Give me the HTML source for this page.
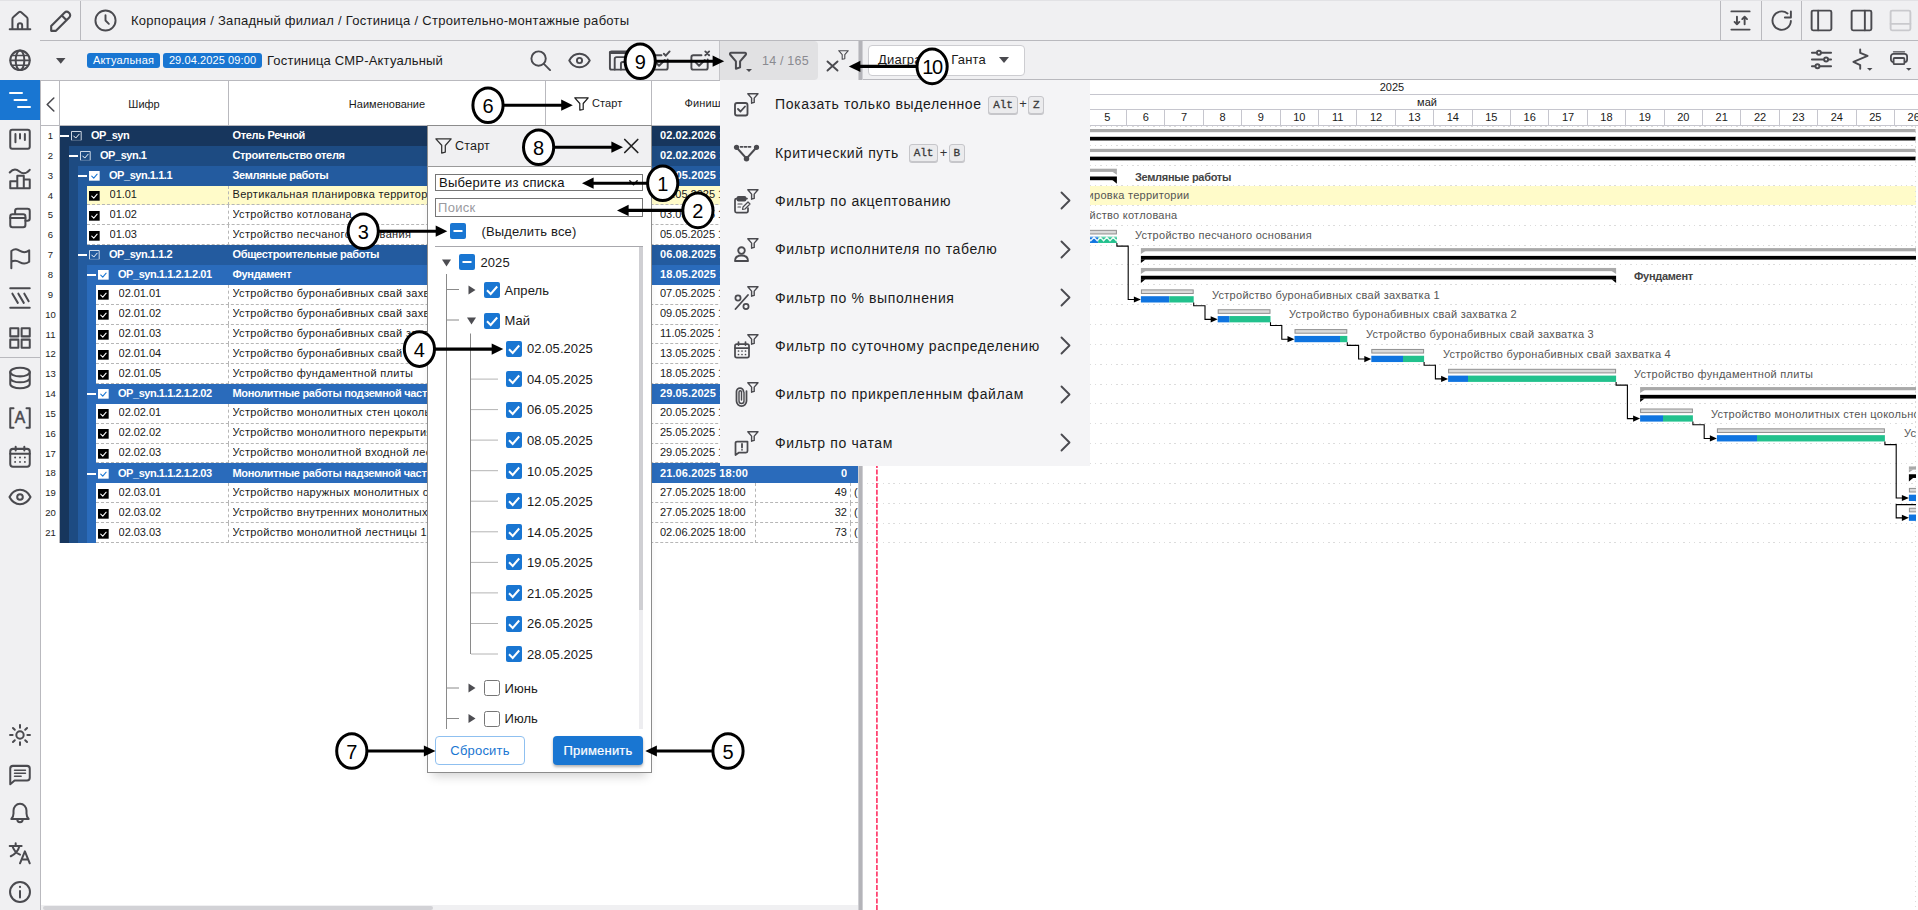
<!DOCTYPE html>
<html lang="ru"><head><meta charset="utf-8"><title>Фильтр по столбцу</title>
<style>
*{box-sizing:border-box;margin:0;padding:0}
html,body{width:1918px;height:910px;overflow:hidden;background:#fff}
body{font-family:"Liberation Sans",sans-serif;font-size:11px;color:#1a1a1a;position:relative}
.abs{position:absolute}
svg{position:absolute;overflow:visible}
.ic{stroke:#4a4a4f;fill:none;stroke-width:1.5;stroke-linecap:round;stroke-linejoin:round}
#side{left:0;top:0;width:41px;height:910px;background:#f0f0f2;border-right:1px solid #b9b9be}
#top{left:40px;top:0;width:1878px;height:41px;background:#f0f0f2;border-bottom:1px solid #b9b9be}
#tb{left:40px;top:41px;width:823px;height:40px;background:#f0f0f2;border-bottom:1px solid #b9b9be}
#tb2{left:863px;top:41px;width:1055px;height:39px;background:#f0f0f2;border-bottom:1px solid #b9b9be}
.vsep{width:1px;background:#b9b9be}
.badge{background:#1976d2;color:#fff;border-radius:3px;height:15px;line-height:15px;font-size:11px;text-align:center;top:53px}
.t{white-space:nowrap;position:absolute}
.hdr{top:82px;height:44px;line-height:44px;text-align:center;font-size:11px;color:#1a1a1a}
.row{position:absolute;left:60px;height:20px}
.rn{position:absolute;left:41px;width:19px;text-align:center;font-size:9.5px;color:#222;height:20px;line-height:20px}
.c{position:absolute;white-space:nowrap;font-size:11px;line-height:20px;height:20px;overflow:hidden}
.b{font-weight:bold;color:#fff}
.gl{position:absolute;white-space:nowrap;font-size:11px;color:#555;line-height:14px}
.num{position:absolute;font-size:20px;color:#000;text-align:center;font-family:"Liberation Sans",sans-serif}
</style></head><body>
<div class="abs" style="left:41px;top:81px;width:817px;height:45px;background:#fff;border-bottom:1px solid #b9b9be"></div>
<div class="abs vsep" style="left:59px;top:81px;height:45px"></div>
<div class="abs vsep" style="left:228px;top:81px;height:45px"></div>
<div class="abs vsep" style="left:545px;top:81px;height:45px"></div>
<div class="abs vsep" style="left:651px;top:81px;height:45px"></div>
<svg class="ic" style="left:45.500px;top:97px" width="9" height="15" viewBox="0 0 9 15"><path d="M7.800 1l-6.600 6.500 6.600 6.500" stroke-width="1.600"/></svg>
<div class="abs hdr" style="left:60px;width:168px">Шифр</div>
<div class="abs hdr" style="left:229px;width:316px">Наименование</div>
<svg class="ic" style="left:574px;top:97px" width="15" height="14" viewBox="0 0 15 14"><path d="M.800 .800h13.400l-5 5.700v6l-3.400 .700v-6.700z" stroke="#1a1a1a" stroke-width="1.200"/></svg>
<div class="t" style="left:592px;top:96px;font-size:11px;line-height:14px;letter-spacing:.1px">Старт</div>
<div class="t" style="left:684.500px;top:96px;font-size:11px;line-height:14px;letter-spacing:.1px">Финиш</div>
<div class="abs vsep" style="left:59px;top:126px;height:417px"></div>
<div class="rn" style="top:126.0px">1</div>
<div class="abs" style="left:60px;width:797.5px;top:126.0px;height:20.150000000000002px;background:#17365d"></div>
<div class="abs" style="left:60.3px;top:135.3px;width:9.200px;height:1.800px;background:#fff"></div>
<svg style="left:71px;top:131.2px" width="10.700" height="9.700" viewBox="0 0 11 10"><path d="M.500 9.500v-9h10v9" fill="none" stroke="#e8eef6" stroke-width=".900"/><path d="M.500 9.600h10" stroke="#e8eef6" stroke-width=".500" opacity=".6"/><path d="M2.800 5.200l2.100 2.100 3.500-4" fill="none" stroke="#fff" stroke-width="1" stroke-linecap="round" stroke-linejoin="round"/></svg>
<div class="c b" style="left:91px;top:125.2px;width:137px;letter-spacing:-.45px">OP_syn</div>
<div class="c b" style="left:232.400px;top:125.2px;width:312px;letter-spacing:-.3px">Отель Речной</div>
<div class="c b" style="left:660px;top:125.2px;width:94px;letter-spacing:.1px">02.02.2026 18:00</div>
<div class="rn" style="top:145.85px">2</div>
<div class="abs" style="left:60px;width:9px;top:145.85px;height:20.150000000000002px;background:#17365d"></div>
<div class="abs" style="left:69px;width:788.5px;top:145.85px;height:20.150000000000002px;background:#1d4b82"></div>
<div class="abs" style="left:69.3px;top:155.15px;width:9.200px;height:1.800px;background:#fff"></div>
<svg style="left:80px;top:151.05px" width="10.700" height="9.700" viewBox="0 0 11 10"><path d="M.500 9.500v-9h10v9" fill="none" stroke="#e8eef6" stroke-width=".900"/><path d="M.500 9.600h10" stroke="#e8eef6" stroke-width=".500" opacity=".6"/><path d="M2.800 5.200l2.100 2.100 3.500-4" fill="none" stroke="#fff" stroke-width="1" stroke-linecap="round" stroke-linejoin="round"/></svg>
<div class="c b" style="left:100px;top:145.05px;width:128px;letter-spacing:-.45px">OP_syn.1</div>
<div class="c b" style="left:232.400px;top:145.05px;width:312px;letter-spacing:-.3px">Строительство отеля</div>
<div class="c b" style="left:660px;top:145.05px;width:94px;letter-spacing:.1px">02.02.2026 18:00</div>
<div class="rn" style="top:165.7px">3</div>
<div class="abs" style="left:60px;width:9px;top:165.7px;height:20.150000000000002px;background:#17365d"></div>
<div class="abs" style="left:69px;width:9px;top:165.7px;height:20.150000000000002px;background:#1d4b82"></div>
<div class="abs" style="left:78px;width:779.5px;top:165.7px;height:20.150000000000002px;background:#235b9f"></div>
<div class="abs" style="left:78.3px;top:175.0px;width:9.200px;height:1.800px;background:#fff"></div>
<svg style="left:89px;top:170.9px" width="10.700" height="9.700" viewBox="0 0 11 10"><rect x="0" y="0" width="11" height="10" fill="#fff"/><path d="M2.800 5.200l2.100 2.100 3.500-4" fill="none" stroke="#1976d2" stroke-width="1.1" stroke-linecap="round" stroke-linejoin="round"/></svg>
<div class="c b" style="left:109px;top:164.9px;width:119px;letter-spacing:-.45px">OP_syn.1.1.1</div>
<div class="c b" style="left:232.400px;top:164.9px;width:312px;letter-spacing:-.3px">Земляные работы</div>
<div class="c b" style="left:660px;top:164.9px;width:94px;letter-spacing:.1px">05.05.2025 18:00</div>
<div class="rn" style="top:185.55px">4</div>
<div class="abs" style="left:60px;width:9px;top:185.55px;height:20.150000000000002px;background:#17365d"></div>
<div class="abs" style="left:69px;width:9px;top:185.55px;height:20.150000000000002px;background:#1d4b82"></div>
<div class="abs" style="left:78px;width:9px;top:185.55px;height:20.150000000000002px;background:#235b9f"></div>
<div class="abs" style="left:87px;width:770.5px;top:185.55px;height:20.150000000000002px;background:#fffbc9"></div>
<svg style="left:89.2px;top:191.05px" width="10.700" height="9.700" viewBox="0 0 11 10"><rect x="0" y="0" width="11" height="10" fill="#000"/><path d="M2.800 5.200l2.100 2.100 3.500-4" fill="none" stroke="#fff" stroke-width="1.1" stroke-linecap="round" stroke-linejoin="round"/></svg>
<div class="c" style="left:109.6px;top:184.05px;width:119px;letter-spacing:-.05px">01.01</div>
<div class="c" style="left:232.500px;top:184.05px;width:312px;letter-spacing:.33px">Вертикальная планировка территории</div>
<div class="c" style="left:660px;top:184.05px;width:94px">01.05.2025 18:00</div>
<div class="abs" style="left:87px;width:770.5px;top:204.4px;height:0;border-top:1px dashed #b6b6b6"></div>
<div class="abs" style="left:228px;top:185.55px;height:19.85px;width:0;border-left:1px dashed #b6b6b6"></div>
<div class="abs" style="left:755px;top:185.55px;height:19.85px;width:0;border-left:1px dashed #b6b6b6"></div>
<div class="abs" style="left:850px;top:185.55px;height:19.85px;width:0;border-left:1px dashed #b6b6b6"></div>
<div class="rn" style="top:205.4px">5</div>
<div class="abs" style="left:60px;width:9px;top:205.4px;height:20.150000000000002px;background:#17365d"></div>
<div class="abs" style="left:69px;width:9px;top:205.4px;height:20.150000000000002px;background:#1d4b82"></div>
<div class="abs" style="left:78px;width:9px;top:205.4px;height:20.150000000000002px;background:#235b9f"></div>
<div class="abs" style="left:87px;width:770.5px;top:205.4px;height:20.150000000000002px;background:#fff"></div>
<svg style="left:89.2px;top:210.9px" width="10.700" height="9.700" viewBox="0 0 11 10"><rect x="0" y="0" width="11" height="10" fill="#000"/><path d="M2.800 5.200l2.100 2.100 3.500-4" fill="none" stroke="#fff" stroke-width="1.1" stroke-linecap="round" stroke-linejoin="round"/></svg>
<div class="c" style="left:109.6px;top:203.9px;width:119px;letter-spacing:-.05px">01.02</div>
<div class="c" style="left:232.500px;top:203.9px;width:312px;letter-spacing:.33px">Устройство котлована</div>
<div class="c" style="left:660px;top:203.9px;width:94px">03.05.2025 18:00</div>
<div class="abs" style="left:87px;width:770.5px;top:224.25px;height:0;border-top:1px dashed #b6b6b6"></div>
<div class="abs" style="left:228px;top:205.4px;height:19.85px;width:0;border-left:1px dashed #b6b6b6"></div>
<div class="abs" style="left:755px;top:205.4px;height:19.85px;width:0;border-left:1px dashed #b6b6b6"></div>
<div class="abs" style="left:850px;top:205.4px;height:19.85px;width:0;border-left:1px dashed #b6b6b6"></div>
<div class="rn" style="top:225.25px">6</div>
<div class="abs" style="left:60px;width:9px;top:225.25px;height:20.150000000000002px;background:#17365d"></div>
<div class="abs" style="left:69px;width:9px;top:225.25px;height:20.150000000000002px;background:#1d4b82"></div>
<div class="abs" style="left:78px;width:9px;top:225.25px;height:20.150000000000002px;background:#235b9f"></div>
<div class="abs" style="left:87px;width:770.5px;top:225.25px;height:20.150000000000002px;background:#fff"></div>
<svg style="left:89.2px;top:230.75px" width="10.700" height="9.700" viewBox="0 0 11 10"><rect x="0" y="0" width="11" height="10" fill="#000"/><path d="M2.800 5.200l2.100 2.100 3.500-4" fill="none" stroke="#fff" stroke-width="1.1" stroke-linecap="round" stroke-linejoin="round"/></svg>
<div class="c" style="left:109.6px;top:223.75px;width:119px;letter-spacing:-.05px">01.03</div>
<div class="c" style="left:232.500px;top:223.75px;width:312px;letter-spacing:.33px">Устройство песчаного основания</div>
<div class="c" style="left:660px;top:223.75px;width:94px">05.05.2025 18:00</div>
<div class="abs" style="left:87px;width:770.5px;top:244.1px;height:0;border-top:1px dashed #b6b6b6"></div>
<div class="abs" style="left:228px;top:225.25px;height:19.85px;width:0;border-left:1px dashed #b6b6b6"></div>
<div class="abs" style="left:755px;top:225.25px;height:19.85px;width:0;border-left:1px dashed #b6b6b6"></div>
<div class="abs" style="left:850px;top:225.25px;height:19.85px;width:0;border-left:1px dashed #b6b6b6"></div>
<div class="rn" style="top:245.1px">7</div>
<div class="abs" style="left:60px;width:9px;top:245.1px;height:20.150000000000002px;background:#17365d"></div>
<div class="abs" style="left:69px;width:9px;top:245.1px;height:20.150000000000002px;background:#1d4b82"></div>
<div class="abs" style="left:78px;width:779.5px;top:245.1px;height:20.150000000000002px;background:#235b9f"></div>
<div class="abs" style="left:78.3px;top:254.4px;width:9.200px;height:1.800px;background:#fff"></div>
<svg style="left:89px;top:250.3px" width="10.700" height="9.700" viewBox="0 0 11 10"><path d="M.500 9.500v-9h10v9" fill="none" stroke="#e8eef6" stroke-width=".900"/><path d="M.500 9.600h10" stroke="#e8eef6" stroke-width=".500" opacity=".6"/><path d="M2.800 5.200l2.100 2.100 3.500-4" fill="none" stroke="#fff" stroke-width="1" stroke-linecap="round" stroke-linejoin="round"/></svg>
<div class="c b" style="left:109px;top:244.3px;width:119px;letter-spacing:-.45px">OP_syn.1.1.2</div>
<div class="c b" style="left:232.400px;top:244.3px;width:312px;letter-spacing:-.3px">Общестроительные работы</div>
<div class="c b" style="left:660px;top:244.3px;width:94px;letter-spacing:.1px">06.08.2025 18:00</div>
<div class="rn" style="top:264.95px">8</div>
<div class="abs" style="left:60px;width:9px;top:264.95px;height:20.150000000000002px;background:#17365d"></div>
<div class="abs" style="left:69px;width:9px;top:264.95px;height:20.150000000000002px;background:#1d4b82"></div>
<div class="abs" style="left:78px;width:9px;top:264.95px;height:20.150000000000002px;background:#235b9f"></div>
<div class="abs" style="left:87px;width:770.5px;top:264.95px;height:20.150000000000002px;background:#2a6bbb"></div>
<div class="abs" style="left:87.3px;top:274.25px;width:9.200px;height:1.800px;background:#fff"></div>
<svg style="left:98px;top:270.15px" width="10.700" height="9.700" viewBox="0 0 11 10"><rect x="0" y="0" width="11" height="10" fill="#fff"/><path d="M2.800 5.200l2.100 2.100 3.500-4" fill="none" stroke="#1976d2" stroke-width="1.1" stroke-linecap="round" stroke-linejoin="round"/></svg>
<div class="c b" style="left:118px;top:264.15px;width:110px;letter-spacing:-.45px">OP_syn.1.1.2.1.2.01</div>
<div class="c b" style="left:232.400px;top:264.15px;width:312px;letter-spacing:-.3px">Фундамент</div>
<div class="c b" style="left:660px;top:264.15px;width:94px;letter-spacing:.1px">18.05.2025 18:00</div>
<div class="rn" style="top:284.8px">9</div>
<div class="abs" style="left:60px;width:9px;top:284.8px;height:20.150000000000002px;background:#17365d"></div>
<div class="abs" style="left:69px;width:9px;top:284.8px;height:20.150000000000002px;background:#1d4b82"></div>
<div class="abs" style="left:78px;width:9px;top:284.8px;height:20.150000000000002px;background:#235b9f"></div>
<div class="abs" style="left:87px;width:9px;top:284.8px;height:20.150000000000002px;background:#2a6bbb"></div>
<div class="abs" style="left:96px;width:761.5px;top:284.8px;height:20.150000000000002px;background:#fff"></div>
<svg style="left:98.2px;top:290.3px" width="10.700" height="9.700" viewBox="0 0 11 10"><rect x="0" y="0" width="11" height="10" fill="#000"/><path d="M2.800 5.200l2.100 2.100 3.500-4" fill="none" stroke="#fff" stroke-width="1.1" stroke-linecap="round" stroke-linejoin="round"/></svg>
<div class="c" style="left:118.6px;top:283.3px;width:110px;letter-spacing:-.05px">02.01.01</div>
<div class="c" style="left:232.500px;top:283.3px;width:312px;letter-spacing:.33px">Устройство буронабивных свай захватка 1</div>
<div class="c" style="left:660px;top:283.3px;width:94px">07.05.2025 18:00</div>
<div class="abs" style="left:96px;width:761.5px;top:303.65px;height:0;border-top:1px dashed #b6b6b6"></div>
<div class="abs" style="left:228px;top:284.8px;height:19.85px;width:0;border-left:1px dashed #b6b6b6"></div>
<div class="abs" style="left:755px;top:284.8px;height:19.85px;width:0;border-left:1px dashed #b6b6b6"></div>
<div class="abs" style="left:850px;top:284.8px;height:19.85px;width:0;border-left:1px dashed #b6b6b6"></div>
<div class="rn" style="top:304.65px">10</div>
<div class="abs" style="left:60px;width:9px;top:304.65px;height:20.150000000000002px;background:#17365d"></div>
<div class="abs" style="left:69px;width:9px;top:304.65px;height:20.150000000000002px;background:#1d4b82"></div>
<div class="abs" style="left:78px;width:9px;top:304.65px;height:20.150000000000002px;background:#235b9f"></div>
<div class="abs" style="left:87px;width:9px;top:304.65px;height:20.150000000000002px;background:#2a6bbb"></div>
<div class="abs" style="left:96px;width:761.5px;top:304.65px;height:20.150000000000002px;background:#fff"></div>
<svg style="left:98.2px;top:310.15px" width="10.700" height="9.700" viewBox="0 0 11 10"><rect x="0" y="0" width="11" height="10" fill="#000"/><path d="M2.800 5.200l2.100 2.100 3.500-4" fill="none" stroke="#fff" stroke-width="1.1" stroke-linecap="round" stroke-linejoin="round"/></svg>
<div class="c" style="left:118.6px;top:303.15px;width:110px;letter-spacing:-.05px">02.01.02</div>
<div class="c" style="left:232.500px;top:303.15px;width:312px;letter-spacing:.33px">Устройство буронабивных свай захватка 2</div>
<div class="c" style="left:660px;top:303.15px;width:94px">09.05.2025 18:00</div>
<div class="abs" style="left:96px;width:761.5px;top:323.5px;height:0;border-top:1px dashed #b6b6b6"></div>
<div class="abs" style="left:228px;top:304.65px;height:19.85px;width:0;border-left:1px dashed #b6b6b6"></div>
<div class="abs" style="left:755px;top:304.65px;height:19.85px;width:0;border-left:1px dashed #b6b6b6"></div>
<div class="abs" style="left:850px;top:304.65px;height:19.85px;width:0;border-left:1px dashed #b6b6b6"></div>
<div class="rn" style="top:324.5px">11</div>
<div class="abs" style="left:60px;width:9px;top:324.5px;height:20.150000000000002px;background:#17365d"></div>
<div class="abs" style="left:69px;width:9px;top:324.5px;height:20.150000000000002px;background:#1d4b82"></div>
<div class="abs" style="left:78px;width:9px;top:324.5px;height:20.150000000000002px;background:#235b9f"></div>
<div class="abs" style="left:87px;width:9px;top:324.5px;height:20.150000000000002px;background:#2a6bbb"></div>
<div class="abs" style="left:96px;width:761.5px;top:324.5px;height:20.150000000000002px;background:#fff"></div>
<svg style="left:98.2px;top:330.0px" width="10.700" height="9.700" viewBox="0 0 11 10"><rect x="0" y="0" width="11" height="10" fill="#000"/><path d="M2.800 5.200l2.100 2.100 3.500-4" fill="none" stroke="#fff" stroke-width="1.1" stroke-linecap="round" stroke-linejoin="round"/></svg>
<div class="c" style="left:118.6px;top:323.0px;width:110px;letter-spacing:-.05px">02.01.03</div>
<div class="c" style="left:232.500px;top:323.0px;width:312px;letter-spacing:.33px">Устройство буронабивных свай захватка 3</div>
<div class="c" style="left:660px;top:323.0px;width:94px">11.05.2025 18:00</div>
<div class="abs" style="left:96px;width:761.5px;top:343.35px;height:0;border-top:1px dashed #b6b6b6"></div>
<div class="abs" style="left:228px;top:324.5px;height:19.85px;width:0;border-left:1px dashed #b6b6b6"></div>
<div class="abs" style="left:755px;top:324.5px;height:19.85px;width:0;border-left:1px dashed #b6b6b6"></div>
<div class="abs" style="left:850px;top:324.5px;height:19.85px;width:0;border-left:1px dashed #b6b6b6"></div>
<div class="rn" style="top:344.35px">12</div>
<div class="abs" style="left:60px;width:9px;top:344.35px;height:20.150000000000002px;background:#17365d"></div>
<div class="abs" style="left:69px;width:9px;top:344.35px;height:20.150000000000002px;background:#1d4b82"></div>
<div class="abs" style="left:78px;width:9px;top:344.35px;height:20.150000000000002px;background:#235b9f"></div>
<div class="abs" style="left:87px;width:9px;top:344.35px;height:20.150000000000002px;background:#2a6bbb"></div>
<div class="abs" style="left:96px;width:761.5px;top:344.35px;height:20.150000000000002px;background:#fff"></div>
<svg style="left:98.2px;top:349.85px" width="10.700" height="9.700" viewBox="0 0 11 10"><rect x="0" y="0" width="11" height="10" fill="#000"/><path d="M2.800 5.200l2.100 2.100 3.500-4" fill="none" stroke="#fff" stroke-width="1.1" stroke-linecap="round" stroke-linejoin="round"/></svg>
<div class="c" style="left:118.6px;top:342.85px;width:110px;letter-spacing:-.05px">02.01.04</div>
<div class="c" style="left:232.500px;top:342.85px;width:312px;letter-spacing:.33px">Устройство буронабивных свай захватка 4</div>
<div class="c" style="left:660px;top:342.85px;width:94px">13.05.2025 18:00</div>
<div class="abs" style="left:96px;width:761.5px;top:363.2px;height:0;border-top:1px dashed #b6b6b6"></div>
<div class="abs" style="left:228px;top:344.35px;height:19.85px;width:0;border-left:1px dashed #b6b6b6"></div>
<div class="abs" style="left:755px;top:344.35px;height:19.85px;width:0;border-left:1px dashed #b6b6b6"></div>
<div class="abs" style="left:850px;top:344.35px;height:19.85px;width:0;border-left:1px dashed #b6b6b6"></div>
<div class="rn" style="top:364.2px">13</div>
<div class="abs" style="left:60px;width:9px;top:364.2px;height:20.150000000000002px;background:#17365d"></div>
<div class="abs" style="left:69px;width:9px;top:364.2px;height:20.150000000000002px;background:#1d4b82"></div>
<div class="abs" style="left:78px;width:9px;top:364.2px;height:20.150000000000002px;background:#235b9f"></div>
<div class="abs" style="left:87px;width:9px;top:364.2px;height:20.150000000000002px;background:#2a6bbb"></div>
<div class="abs" style="left:96px;width:761.5px;top:364.2px;height:20.150000000000002px;background:#fff"></div>
<svg style="left:98.2px;top:369.7px" width="10.700" height="9.700" viewBox="0 0 11 10"><rect x="0" y="0" width="11" height="10" fill="#000"/><path d="M2.800 5.200l2.100 2.100 3.500-4" fill="none" stroke="#fff" stroke-width="1.1" stroke-linecap="round" stroke-linejoin="round"/></svg>
<div class="c" style="left:118.6px;top:362.7px;width:110px;letter-spacing:-.05px">02.01.05</div>
<div class="c" style="left:232.500px;top:362.7px;width:312px;letter-spacing:.33px">Устройство фундаментной плиты</div>
<div class="c" style="left:660px;top:362.7px;width:94px">18.05.2025 18:00</div>
<div class="abs" style="left:96px;width:761.5px;top:383.05px;height:0;border-top:1px dashed #b6b6b6"></div>
<div class="abs" style="left:228px;top:364.2px;height:19.85px;width:0;border-left:1px dashed #b6b6b6"></div>
<div class="abs" style="left:755px;top:364.2px;height:19.85px;width:0;border-left:1px dashed #b6b6b6"></div>
<div class="abs" style="left:850px;top:364.2px;height:19.85px;width:0;border-left:1px dashed #b6b6b6"></div>
<div class="rn" style="top:384.05px">14</div>
<div class="abs" style="left:60px;width:9px;top:384.05px;height:20.150000000000002px;background:#17365d"></div>
<div class="abs" style="left:69px;width:9px;top:384.05px;height:20.150000000000002px;background:#1d4b82"></div>
<div class="abs" style="left:78px;width:9px;top:384.05px;height:20.150000000000002px;background:#235b9f"></div>
<div class="abs" style="left:87px;width:770.5px;top:384.05px;height:20.150000000000002px;background:#2a6bbb"></div>
<div class="abs" style="left:87.3px;top:393.35px;width:9.200px;height:1.800px;background:#fff"></div>
<svg style="left:98px;top:389.25px" width="10.700" height="9.700" viewBox="0 0 11 10"><rect x="0" y="0" width="11" height="10" fill="#fff"/><path d="M2.800 5.200l2.100 2.100 3.500-4" fill="none" stroke="#1976d2" stroke-width="1.1" stroke-linecap="round" stroke-linejoin="round"/></svg>
<div class="c b" style="left:118px;top:383.25px;width:110px;letter-spacing:-.45px">OP_syn.1.1.2.1.2.02</div>
<div class="c b" style="left:232.400px;top:383.25px;width:312px;letter-spacing:-.3px">Монолитные работы подземной части</div>
<div class="c b" style="left:660px;top:383.25px;width:94px;letter-spacing:.1px">29.05.2025 18:00</div>
<div class="rn" style="top:403.9px">15</div>
<div class="abs" style="left:60px;width:9px;top:403.9px;height:20.150000000000002px;background:#17365d"></div>
<div class="abs" style="left:69px;width:9px;top:403.9px;height:20.150000000000002px;background:#1d4b82"></div>
<div class="abs" style="left:78px;width:9px;top:403.9px;height:20.150000000000002px;background:#235b9f"></div>
<div class="abs" style="left:87px;width:9px;top:403.9px;height:20.150000000000002px;background:#2a6bbb"></div>
<div class="abs" style="left:96px;width:761.5px;top:403.9px;height:20.150000000000002px;background:#fff"></div>
<svg style="left:98.2px;top:409.4px" width="10.700" height="9.700" viewBox="0 0 11 10"><rect x="0" y="0" width="11" height="10" fill="#000"/><path d="M2.800 5.200l2.100 2.100 3.500-4" fill="none" stroke="#fff" stroke-width="1.1" stroke-linecap="round" stroke-linejoin="round"/></svg>
<div class="c" style="left:118.6px;top:402.4px;width:110px;letter-spacing:-.05px">02.02.01</div>
<div class="c" style="left:232.500px;top:402.4px;width:312px;letter-spacing:.33px">Устройство монолитных стен цокольного этажа</div>
<div class="c" style="left:660px;top:402.4px;width:94px">20.05.2025 18:00</div>
<div class="abs" style="left:96px;width:761.5px;top:422.75px;height:0;border-top:1px dashed #b6b6b6"></div>
<div class="abs" style="left:228px;top:403.9px;height:19.85px;width:0;border-left:1px dashed #b6b6b6"></div>
<div class="abs" style="left:755px;top:403.9px;height:19.85px;width:0;border-left:1px dashed #b6b6b6"></div>
<div class="abs" style="left:850px;top:403.9px;height:19.85px;width:0;border-left:1px dashed #b6b6b6"></div>
<div class="rn" style="top:423.75px">16</div>
<div class="abs" style="left:60px;width:9px;top:423.75px;height:20.150000000000002px;background:#17365d"></div>
<div class="abs" style="left:69px;width:9px;top:423.75px;height:20.150000000000002px;background:#1d4b82"></div>
<div class="abs" style="left:78px;width:9px;top:423.75px;height:20.150000000000002px;background:#235b9f"></div>
<div class="abs" style="left:87px;width:9px;top:423.75px;height:20.150000000000002px;background:#2a6bbb"></div>
<div class="abs" style="left:96px;width:761.5px;top:423.75px;height:20.150000000000002px;background:#fff"></div>
<svg style="left:98.2px;top:429.25px" width="10.700" height="9.700" viewBox="0 0 11 10"><rect x="0" y="0" width="11" height="10" fill="#000"/><path d="M2.800 5.200l2.100 2.100 3.500-4" fill="none" stroke="#fff" stroke-width="1.1" stroke-linecap="round" stroke-linejoin="round"/></svg>
<div class="c" style="left:118.6px;top:422.25px;width:110px;letter-spacing:-.05px">02.02.02</div>
<div class="c" style="left:232.500px;top:422.25px;width:312px;letter-spacing:.33px">Устройство монолитного перекрытия</div>
<div class="c" style="left:660px;top:422.25px;width:94px">25.05.2025 18:00</div>
<div class="abs" style="left:96px;width:761.5px;top:442.6px;height:0;border-top:1px dashed #b6b6b6"></div>
<div class="abs" style="left:228px;top:423.75px;height:19.85px;width:0;border-left:1px dashed #b6b6b6"></div>
<div class="abs" style="left:755px;top:423.75px;height:19.85px;width:0;border-left:1px dashed #b6b6b6"></div>
<div class="abs" style="left:850px;top:423.75px;height:19.85px;width:0;border-left:1px dashed #b6b6b6"></div>
<div class="rn" style="top:443.6px">17</div>
<div class="abs" style="left:60px;width:9px;top:443.6px;height:20.150000000000002px;background:#17365d"></div>
<div class="abs" style="left:69px;width:9px;top:443.6px;height:20.150000000000002px;background:#1d4b82"></div>
<div class="abs" style="left:78px;width:9px;top:443.6px;height:20.150000000000002px;background:#235b9f"></div>
<div class="abs" style="left:87px;width:9px;top:443.6px;height:20.150000000000002px;background:#2a6bbb"></div>
<div class="abs" style="left:96px;width:761.5px;top:443.6px;height:20.150000000000002px;background:#fff"></div>
<svg style="left:98.2px;top:449.1px" width="10.700" height="9.700" viewBox="0 0 11 10"><rect x="0" y="0" width="11" height="10" fill="#000"/><path d="M2.800 5.200l2.100 2.100 3.500-4" fill="none" stroke="#fff" stroke-width="1.1" stroke-linecap="round" stroke-linejoin="round"/></svg>
<div class="c" style="left:118.6px;top:442.1px;width:110px;letter-spacing:-.05px">02.02.03</div>
<div class="c" style="left:232.500px;top:442.1px;width:312px;letter-spacing:.33px">Устройство монолитной входной лестницы</div>
<div class="c" style="left:660px;top:442.1px;width:94px">29.05.2025 18:00</div>
<div class="abs" style="left:96px;width:761.5px;top:462.45px;height:0;border-top:1px dashed #b6b6b6"></div>
<div class="abs" style="left:228px;top:443.6px;height:19.85px;width:0;border-left:1px dashed #b6b6b6"></div>
<div class="abs" style="left:755px;top:443.6px;height:19.85px;width:0;border-left:1px dashed #b6b6b6"></div>
<div class="abs" style="left:850px;top:443.6px;height:19.85px;width:0;border-left:1px dashed #b6b6b6"></div>
<div class="rn" style="top:463.45px">18</div>
<div class="abs" style="left:60px;width:9px;top:463.45px;height:20.150000000000002px;background:#17365d"></div>
<div class="abs" style="left:69px;width:9px;top:463.45px;height:20.150000000000002px;background:#1d4b82"></div>
<div class="abs" style="left:78px;width:9px;top:463.45px;height:20.150000000000002px;background:#235b9f"></div>
<div class="abs" style="left:87px;width:770.5px;top:463.45px;height:20.150000000000002px;background:#2a6bbb"></div>
<div class="abs" style="left:87.3px;top:472.75px;width:9.200px;height:1.800px;background:#fff"></div>
<svg style="left:98px;top:468.65px" width="10.700" height="9.700" viewBox="0 0 11 10"><rect x="0" y="0" width="11" height="10" fill="#fff"/><path d="M2.800 5.200l2.100 2.100 3.500-4" fill="none" stroke="#1976d2" stroke-width="1.1" stroke-linecap="round" stroke-linejoin="round"/></svg>
<div class="c b" style="left:118px;top:462.65px;width:110px;letter-spacing:-.45px">OP_syn.1.1.2.1.2.03</div>
<div class="c b" style="left:232.400px;top:462.65px;width:312px;letter-spacing:-.3px">Монолитные работы надземной части</div>
<div class="c b" style="left:660px;top:462.65px;width:94px;letter-spacing:.1px">21.06.2025 18:00</div>
<div class="c b" style="left:760px;top:462.65px;width:87px;text-align:right">0</div>
<div class="rn" style="top:483.3px">19</div>
<div class="abs" style="left:60px;width:9px;top:483.3px;height:20.150000000000002px;background:#17365d"></div>
<div class="abs" style="left:69px;width:9px;top:483.3px;height:20.150000000000002px;background:#1d4b82"></div>
<div class="abs" style="left:78px;width:9px;top:483.3px;height:20.150000000000002px;background:#235b9f"></div>
<div class="abs" style="left:87px;width:9px;top:483.3px;height:20.150000000000002px;background:#2a6bbb"></div>
<div class="abs" style="left:96px;width:761.5px;top:483.3px;height:20.150000000000002px;background:#fff"></div>
<svg style="left:98.2px;top:488.8px" width="10.700" height="9.700" viewBox="0 0 11 10"><rect x="0" y="0" width="11" height="10" fill="#000"/><path d="M2.800 5.200l2.100 2.100 3.500-4" fill="none" stroke="#fff" stroke-width="1.1" stroke-linecap="round" stroke-linejoin="round"/></svg>
<div class="c" style="left:118.6px;top:481.8px;width:110px;letter-spacing:-.05px">02.03.01</div>
<div class="c" style="left:232.500px;top:481.8px;width:312px;letter-spacing:.33px">Устройство наружных монолитных стен</div>
<div class="c" style="left:660px;top:481.8px;width:94px">27.05.2025 18:00</div>
<div class="c" style="left:760px;top:481.8px;width:87px;text-align:right">49</div>
<div class="c" style="left:854px;top:481.8px;width:4px">(</div>
<div class="abs" style="left:96px;width:761.5px;top:502.15px;height:0;border-top:1px dashed #b6b6b6"></div>
<div class="abs" style="left:228px;top:483.3px;height:19.85px;width:0;border-left:1px dashed #b6b6b6"></div>
<div class="abs" style="left:755px;top:483.3px;height:19.85px;width:0;border-left:1px dashed #b6b6b6"></div>
<div class="abs" style="left:850px;top:483.3px;height:19.85px;width:0;border-left:1px dashed #b6b6b6"></div>
<div class="rn" style="top:503.15px">20</div>
<div class="abs" style="left:60px;width:9px;top:503.15px;height:20.150000000000002px;background:#17365d"></div>
<div class="abs" style="left:69px;width:9px;top:503.15px;height:20.150000000000002px;background:#1d4b82"></div>
<div class="abs" style="left:78px;width:9px;top:503.15px;height:20.150000000000002px;background:#235b9f"></div>
<div class="abs" style="left:87px;width:9px;top:503.15px;height:20.150000000000002px;background:#2a6bbb"></div>
<div class="abs" style="left:96px;width:761.5px;top:503.15px;height:20.150000000000002px;background:#fff"></div>
<svg style="left:98.2px;top:508.65px" width="10.700" height="9.700" viewBox="0 0 11 10"><rect x="0" y="0" width="11" height="10" fill="#000"/><path d="M2.800 5.200l2.100 2.100 3.500-4" fill="none" stroke="#fff" stroke-width="1.1" stroke-linecap="round" stroke-linejoin="round"/></svg>
<div class="c" style="left:118.6px;top:501.65px;width:110px;letter-spacing:-.05px">02.03.02</div>
<div class="c" style="left:232.500px;top:501.65px;width:312px;letter-spacing:.33px">Устройство внутренних монолитных стен</div>
<div class="c" style="left:660px;top:501.65px;width:94px">27.05.2025 18:00</div>
<div class="c" style="left:760px;top:501.65px;width:87px;text-align:right">32</div>
<div class="c" style="left:854px;top:501.65px;width:4px">(</div>
<div class="abs" style="left:96px;width:761.5px;top:522.0px;height:0;border-top:1px dashed #b6b6b6"></div>
<div class="abs" style="left:228px;top:503.15px;height:19.85px;width:0;border-left:1px dashed #b6b6b6"></div>
<div class="abs" style="left:755px;top:503.15px;height:19.85px;width:0;border-left:1px dashed #b6b6b6"></div>
<div class="abs" style="left:850px;top:503.15px;height:19.85px;width:0;border-left:1px dashed #b6b6b6"></div>
<div class="rn" style="top:523.0px">21</div>
<div class="abs" style="left:60px;width:9px;top:523.0px;height:20.150000000000002px;background:#17365d"></div>
<div class="abs" style="left:69px;width:9px;top:523.0px;height:20.150000000000002px;background:#1d4b82"></div>
<div class="abs" style="left:78px;width:9px;top:523.0px;height:20.150000000000002px;background:#235b9f"></div>
<div class="abs" style="left:87px;width:9px;top:523.0px;height:20.150000000000002px;background:#2a6bbb"></div>
<div class="abs" style="left:96px;width:761.5px;top:523.0px;height:20.150000000000002px;background:#fff"></div>
<svg style="left:98.2px;top:528.5px" width="10.700" height="9.700" viewBox="0 0 11 10"><rect x="0" y="0" width="11" height="10" fill="#000"/><path d="M2.800 5.200l2.100 2.100 3.500-4" fill="none" stroke="#fff" stroke-width="1.1" stroke-linecap="round" stroke-linejoin="round"/></svg>
<div class="c" style="left:118.6px;top:521.5px;width:110px;letter-spacing:-.05px">02.03.03</div>
<div class="c" style="left:232.500px;top:521.5px;width:312px;letter-spacing:.33px">Устройство монолитной лестницы 1-го этажа</div>
<div class="c" style="left:660px;top:521.5px;width:94px">02.06.2025 18:00</div>
<div class="c" style="left:760px;top:521.5px;width:87px;text-align:right">73</div>
<div class="c" style="left:854px;top:521.5px;width:4px">(</div>
<div class="abs" style="left:96px;width:761.5px;top:541.85px;height:0;border-top:1px dashed #b6b6b6"></div>
<div class="abs" style="left:228px;top:523.0px;height:19.85px;width:0;border-left:1px dashed #b6b6b6"></div>
<div class="abs" style="left:755px;top:523.0px;height:19.85px;width:0;border-left:1px dashed #b6b6b6"></div>
<div class="abs" style="left:850px;top:523.0px;height:19.85px;width:0;border-left:1px dashed #b6b6b6"></div>
<div class="abs" style="left:41px;top:905px;width:817px;height:5px;background:#f0f0f2"></div>
<div class="abs" style="left:43px;top:906px;width:390px;height:4px;background:#d2d2d6;border-radius:2px"></div>
<div class="abs" style="left:863px;top:80px;width:1055px;height:830px;background:#fff"></div>
<div class="abs" style="left:863px;top:81px;width:1055px;height:45px;overflow:hidden">
<div class="abs" style="left:0;top:13px;width:1055px;height:1px;background:#c6c6ce"></div>
<div class="abs" style="left:0;top:28px;width:1055px;height:1px;background:#c6c6ce"></div>
<div class="abs" style="left:0;top:44px;width:1055px;height:1px;background:#c6c6ce"></div>
<div class="t" style="left:509px;top:0px;width:40px;text-align:center;font-size:11px;line-height:13px">2025</div>
<div class="t" style="left:544px;top:14px;width:40px;text-align:center;font-size:11px;line-height:14px">май</div>
<div class="abs" style="left:-5.8px;top:29px;width:1px;height:15px;background:#c6c6ce"></div>
<div class="abs" style="left:32.6px;top:29px;width:1px;height:15px;background:#c6c6ce"></div>
<div class="abs" style="left:71.0px;top:29px;width:1px;height:15px;background:#c6c6ce"></div>
<div class="t" style="left:71.5px;top:29px;width:38.400px;text-align:center;font-size:11px;line-height:15px">1</div>
<div class="abs" style="left:109.4px;top:29px;width:1px;height:15px;background:#c6c6ce"></div>
<div class="t" style="left:109.9px;top:29px;width:38.400px;text-align:center;font-size:11px;line-height:15px">2</div>
<div class="abs" style="left:147.8px;top:29px;width:1px;height:15px;background:#c6c6ce"></div>
<div class="t" style="left:148.3px;top:29px;width:38.400px;text-align:center;font-size:11px;line-height:15px">3</div>
<div class="abs" style="left:186.2px;top:29px;width:1px;height:15px;background:#c6c6ce"></div>
<div class="t" style="left:186.7px;top:29px;width:38.400px;text-align:center;font-size:11px;line-height:15px">4</div>
<div class="abs" style="left:224.6px;top:29px;width:1px;height:15px;background:#c6c6ce"></div>
<div class="t" style="left:225.1px;top:29px;width:38.400px;text-align:center;font-size:11px;line-height:15px">5</div>
<div class="abs" style="left:263.0px;top:29px;width:1px;height:15px;background:#c6c6ce"></div>
<div class="t" style="left:263.5px;top:29px;width:38.400px;text-align:center;font-size:11px;line-height:15px">6</div>
<div class="abs" style="left:301.4px;top:29px;width:1px;height:15px;background:#c6c6ce"></div>
<div class="t" style="left:301.9px;top:29px;width:38.400px;text-align:center;font-size:11px;line-height:15px">7</div>
<div class="abs" style="left:339.8px;top:29px;width:1px;height:15px;background:#c6c6ce"></div>
<div class="t" style="left:340.3px;top:29px;width:38.400px;text-align:center;font-size:11px;line-height:15px">8</div>
<div class="abs" style="left:378.2px;top:29px;width:1px;height:15px;background:#c6c6ce"></div>
<div class="t" style="left:378.7px;top:29px;width:38.400px;text-align:center;font-size:11px;line-height:15px">9</div>
<div class="abs" style="left:416.6px;top:29px;width:1px;height:15px;background:#c6c6ce"></div>
<div class="t" style="left:417.1px;top:29px;width:38.400px;text-align:center;font-size:11px;line-height:15px">10</div>
<div class="abs" style="left:455.0px;top:29px;width:1px;height:15px;background:#c6c6ce"></div>
<div class="t" style="left:455.5px;top:29px;width:38.400px;text-align:center;font-size:11px;line-height:15px">11</div>
<div class="abs" style="left:493.4px;top:29px;width:1px;height:15px;background:#c6c6ce"></div>
<div class="t" style="left:493.9px;top:29px;width:38.400px;text-align:center;font-size:11px;line-height:15px">12</div>
<div class="abs" style="left:531.8px;top:29px;width:1px;height:15px;background:#c6c6ce"></div>
<div class="t" style="left:532.3px;top:29px;width:38.400px;text-align:center;font-size:11px;line-height:15px">13</div>
<div class="abs" style="left:570.2px;top:29px;width:1px;height:15px;background:#c6c6ce"></div>
<div class="t" style="left:570.7px;top:29px;width:38.400px;text-align:center;font-size:11px;line-height:15px">14</div>
<div class="abs" style="left:608.6px;top:29px;width:1px;height:15px;background:#c6c6ce"></div>
<div class="t" style="left:609.1px;top:29px;width:38.400px;text-align:center;font-size:11px;line-height:15px">15</div>
<div class="abs" style="left:647.0px;top:29px;width:1px;height:15px;background:#c6c6ce"></div>
<div class="t" style="left:647.5px;top:29px;width:38.400px;text-align:center;font-size:11px;line-height:15px">16</div>
<div class="abs" style="left:685.4px;top:29px;width:1px;height:15px;background:#c6c6ce"></div>
<div class="t" style="left:685.9px;top:29px;width:38.400px;text-align:center;font-size:11px;line-height:15px">17</div>
<div class="abs" style="left:723.8px;top:29px;width:1px;height:15px;background:#c6c6ce"></div>
<div class="t" style="left:724.3px;top:29px;width:38.400px;text-align:center;font-size:11px;line-height:15px">18</div>
<div class="abs" style="left:762.2px;top:29px;width:1px;height:15px;background:#c6c6ce"></div>
<div class="t" style="left:762.7px;top:29px;width:38.400px;text-align:center;font-size:11px;line-height:15px">19</div>
<div class="abs" style="left:800.6px;top:29px;width:1px;height:15px;background:#c6c6ce"></div>
<div class="t" style="left:801.1px;top:29px;width:38.400px;text-align:center;font-size:11px;line-height:15px">20</div>
<div class="abs" style="left:839.0px;top:29px;width:1px;height:15px;background:#c6c6ce"></div>
<div class="t" style="left:839.5px;top:29px;width:38.400px;text-align:center;font-size:11px;line-height:15px">21</div>
<div class="abs" style="left:877.4px;top:29px;width:1px;height:15px;background:#c6c6ce"></div>
<div class="t" style="left:877.9px;top:29px;width:38.400px;text-align:center;font-size:11px;line-height:15px">22</div>
<div class="abs" style="left:915.8px;top:29px;width:1px;height:15px;background:#c6c6ce"></div>
<div class="t" style="left:916.3px;top:29px;width:38.400px;text-align:center;font-size:11px;line-height:15px">23</div>
<div class="abs" style="left:954.2px;top:29px;width:1px;height:15px;background:#c6c6ce"></div>
<div class="t" style="left:954.7px;top:29px;width:38.400px;text-align:center;font-size:11px;line-height:15px">24</div>
<div class="abs" style="left:992.6px;top:29px;width:1px;height:15px;background:#c6c6ce"></div>
<div class="t" style="left:993.1px;top:29px;width:38.400px;text-align:center;font-size:11px;line-height:15px">25</div>
<div class="abs" style="left:1031.0px;top:29px;width:1px;height:15px;background:#c6c6ce"></div>
<div class="t" style="left:1031.5px;top:29px;width:38.400px;text-align:center;font-size:11px;line-height:15px">26</div>
<div class="abs" style="left:1069.4px;top:29px;width:1px;height:15px;background:#c6c6ce"></div>
<div class="t" style="left:1069.9px;top:29px;width:38.400px;text-align:center;font-size:11px;line-height:15px">27</div>
</div>
<div class="abs" style="left:863px;top:81px;width:1052.5px;height:829px;overflow:hidden">
<div class="abs" style="left:0;top:104.55px;width:1052.5px;height:19.85px;background:#fffbc9"></div>
<div class="abs" style="left:4px;top:44.5px;width:1048.5px;height:1px;background:repeating-linear-gradient(90deg,#dcdcdc 0 1.500px,transparent 1.500px 5.300px)"></div>
<div class="abs" style="left:4px;top:64.35px;width:1048.5px;height:1px;background:repeating-linear-gradient(90deg,#dcdcdc 0 1.500px,transparent 1.500px 5.300px)"></div>
<div class="abs" style="left:4px;top:84.2px;width:1048.5px;height:1px;background:repeating-linear-gradient(90deg,#dcdcdc 0 1.500px,transparent 1.500px 5.300px)"></div>
<div class="abs" style="left:4px;top:104.05px;width:1048.5px;height:1px;background:repeating-linear-gradient(90deg,#dcdcdc 0 1.500px,transparent 1.500px 5.300px)"></div>
<div class="abs" style="left:4px;top:123.9px;width:1048.5px;height:1px;background:repeating-linear-gradient(90deg,#dcdcdc 0 1.500px,transparent 1.500px 5.300px)"></div>
<div class="abs" style="left:4px;top:143.75px;width:1048.5px;height:1px;background:repeating-linear-gradient(90deg,#dcdcdc 0 1.500px,transparent 1.500px 5.300px)"></div>
<div class="abs" style="left:4px;top:163.6px;width:1048.5px;height:1px;background:repeating-linear-gradient(90deg,#dcdcdc 0 1.500px,transparent 1.500px 5.300px)"></div>
<div class="abs" style="left:4px;top:183.45px;width:1048.5px;height:1px;background:repeating-linear-gradient(90deg,#dcdcdc 0 1.500px,transparent 1.500px 5.300px)"></div>
<div class="abs" style="left:4px;top:203.3px;width:1048.5px;height:1px;background:repeating-linear-gradient(90deg,#dcdcdc 0 1.500px,transparent 1.500px 5.300px)"></div>
<div class="abs" style="left:4px;top:223.15px;width:1048.5px;height:1px;background:repeating-linear-gradient(90deg,#dcdcdc 0 1.500px,transparent 1.500px 5.300px)"></div>
<div class="abs" style="left:4px;top:243.0px;width:1048.5px;height:1px;background:repeating-linear-gradient(90deg,#dcdcdc 0 1.500px,transparent 1.500px 5.300px)"></div>
<div class="abs" style="left:4px;top:262.85px;width:1048.5px;height:1px;background:repeating-linear-gradient(90deg,#dcdcdc 0 1.500px,transparent 1.500px 5.300px)"></div>
<div class="abs" style="left:4px;top:282.7px;width:1048.5px;height:1px;background:repeating-linear-gradient(90deg,#dcdcdc 0 1.500px,transparent 1.500px 5.300px)"></div>
<div class="abs" style="left:4px;top:302.55px;width:1048.5px;height:1px;background:repeating-linear-gradient(90deg,#dcdcdc 0 1.500px,transparent 1.500px 5.300px)"></div>
<div class="abs" style="left:4px;top:322.4px;width:1048.5px;height:1px;background:repeating-linear-gradient(90deg,#dcdcdc 0 1.500px,transparent 1.500px 5.300px)"></div>
<div class="abs" style="left:4px;top:342.25px;width:1048.5px;height:1px;background:repeating-linear-gradient(90deg,#dcdcdc 0 1.500px,transparent 1.500px 5.300px)"></div>
<div class="abs" style="left:4px;top:362.1px;width:1048.5px;height:1px;background:repeating-linear-gradient(90deg,#dcdcdc 0 1.500px,transparent 1.500px 5.300px)"></div>
<div class="abs" style="left:4px;top:381.95px;width:1048.5px;height:1px;background:repeating-linear-gradient(90deg,#dcdcdc 0 1.500px,transparent 1.500px 5.300px)"></div>
<div class="abs" style="left:4px;top:401.8px;width:1048.5px;height:1px;background:repeating-linear-gradient(90deg,#dcdcdc 0 1.500px,transparent 1.500px 5.300px)"></div>
<div class="abs" style="left:4px;top:421.65px;width:1048.5px;height:1px;background:repeating-linear-gradient(90deg,#dcdcdc 0 1.500px,transparent 1.500px 5.300px)"></div>
<div class="abs" style="left:4px;top:441.5px;width:1048.5px;height:1px;background:repeating-linear-gradient(90deg,#dcdcdc 0 1.500px,transparent 1.500px 5.300px)"></div>
<div class="abs" style="left:4px;top:461.35px;width:1048.5px;height:1px;background:repeating-linear-gradient(90deg,#dcdcdc 0 1.500px,transparent 1.500px 5.300px)"></div>
<div class="abs" style="left:1051.5px;top:45px;width:1px;height:784px;background:repeating-linear-gradient(180deg,#dcdcdc 0 1.500px,transparent 1.500px 5px)"></div>
<svg style="left:0;top:0" width="1052.5" height="829" viewBox="863 81 1052.5 829"><rect x="860" y="129.00" width="1055.50" height="3.200" fill="#a9a9a9"/><rect x="860" y="136.80" width="1055.50" height="3.700" fill="#000"/><rect x="860" y="148.85" width="1055.50" height="3.200" fill="#a9a9a9"/><rect x="860" y="156.65" width="1055.50" height="3.700" fill="#000"/><rect x="860" y="168.70" width="256.90" height="3.200" fill="#a9a9a9"/><rect x="860" y="176.50" width="256.90" height="3.700" fill="#000"/><path d="M1116.9 171.70h-4.500l4.500 3z" fill="#a9a9a9"/><path d="M1116.9 180.10h-4.500l4.500 3.600z" fill="#000"/><rect x="1000.50" y="230.35" width="115.90" height="3.600" fill="#dadada" stroke="#8f8f8f" stroke-width="1"/><rect x="1000.00" y="236.65" width="98.20" height="6.300" fill="#0f74e0"/><rect x="1098.20" y="236.65" width="18.70" height="6.300" fill="#22c18d"/><path d="M998.0 237.25L1001.2 240.75L1004.4 237.25L1007.6 240.75L1010.8 237.25L1014.0 240.75L1017.2 237.25L1020.4 240.75L1023.6 237.25L1026.8 240.75L1030.0 237.25L1033.2 240.75L1036.4 237.25L1039.6 240.75L1042.8 237.25L1046.0 240.75L1049.2 237.25L1052.4 240.75L1055.6 237.25L1058.8 240.75L1062.0 237.25L1065.2 240.75L1068.4 237.25L1071.6 240.75L1074.8 237.25L1078.0 240.75L1081.2 237.25L1084.4 240.75L1087.6 237.25L1090.8 240.75L1094.0 237.25L1097.2 240.75L1100.4 237.25L1103.6 240.75L1106.8 237.25L1110.0 240.75L1113.2 237.25L1116.4 240.75L1119.6 237.25" fill="none" stroke="#fff" stroke-width="1.400" opacity=".9"/><rect x="1000.00" y="236.65" width="116.90" height="1" fill="#fff" opacity=".45"/><rect x="1140.9" y="248.10" width="789.10" height="3.200" fill="#a9a9a9"/><rect x="1140.9" y="255.90" width="789.10" height="3.700" fill="#000"/><path d="M1140.9 251.10h4.500l-4.500 3z" fill="#a9a9a9"/><path d="M1140.9 259.50h4.500l-4.500 3.600z" fill="#000"/><rect x="1140.9" y="267.95" width="475.20" height="3.200" fill="#a9a9a9"/><rect x="1140.9" y="275.75" width="475.20" height="3.700" fill="#000"/><path d="M1140.9 270.95h4.500l-4.500 3z" fill="#a9a9a9"/><path d="M1140.9 279.35h4.500l-4.500 3.600z" fill="#000"/><path d="M1616.1 270.95h-4.500l4.500 3z" fill="#a9a9a9"/><path d="M1616.1 279.35h-4.500l4.500 3.600z" fill="#000"/><rect x="1141.40" y="289.90" width="51.80" height="3.600" fill="#dadada" stroke="#8f8f8f" stroke-width="1"/><rect x="1140.90" y="296.20" width="28.40" height="6.300" fill="#0f74e0"/><rect x="1169.30" y="296.20" width="24.40" height="6.300" fill="#22c18d"/><rect x="1218.20" y="309.75" width="51.80" height="3.600" fill="#dadada" stroke="#8f8f8f" stroke-width="1"/><rect x="1217.70" y="316.05" width="11.90" height="6.300" fill="#0f74e0"/><rect x="1229.60" y="316.05" width="40.90" height="6.300" fill="#22c18d"/><rect x="1295.00" y="329.60" width="51.80" height="3.600" fill="#dadada" stroke="#8f8f8f" stroke-width="1"/><rect x="1294.50" y="335.90" width="45.50" height="6.300" fill="#0f74e0"/><rect x="1340.00" y="335.90" width="7.30" height="6.300" fill="#22c18d"/><rect x="1371.80" y="349.45" width="51.80" height="3.600" fill="#dadada" stroke="#8f8f8f" stroke-width="1"/><rect x="1371.30" y="355.75" width="31.70" height="6.300" fill="#0f74e0"/><rect x="1403.00" y="355.75" width="21.10" height="6.300" fill="#22c18d"/><rect x="1448.60" y="369.30" width="167.00" height="3.600" fill="#dadada" stroke="#8f8f8f" stroke-width="1"/><rect x="1448.10" y="375.60" width="19.90" height="6.300" fill="#0f74e0"/><rect x="1468.00" y="375.60" width="148.10" height="6.300" fill="#22c18d"/><rect x="1640.60" y="409.00" width="51.80" height="3.600" fill="#dadada" stroke="#8f8f8f" stroke-width="1"/><rect x="1640.10" y="415.30" width="22.90" height="6.300" fill="#0f74e0"/><rect x="1663.00" y="415.30" width="29.90" height="6.300" fill="#22c18d"/><rect x="1717.40" y="428.85" width="167.00" height="3.600" fill="#dadada" stroke="#8f8f8f" stroke-width="1"/><rect x="1716.90" y="435.15" width="40.10" height="6.300" fill="#0f74e0"/><rect x="1757.00" y="435.15" width="127.90" height="6.300" fill="#22c18d"/><rect x="1640.1" y="387.05" width="289.90" height="3.200" fill="#a9a9a9"/><rect x="1640.1" y="394.85" width="289.90" height="3.700" fill="#000"/><path d="M1640.1 390.05h4.500l-4.500 3z" fill="#a9a9a9"/><path d="M1640.1 398.45h4.500l-4.500 3.600z" fill="#000"/><rect x="1908.9" y="466.45" width="21.10" height="3.200" fill="#a9a9a9"/><rect x="1908.9" y="474.25" width="21.10" height="3.700" fill="#000"/><path d="M1908.9 469.45h4.500l-4.500 3z" fill="#a9a9a9"/><path d="M1908.9 477.85h4.500l-4.500 3.600z" fill="#000"/><rect x="1909.40" y="488.40" width="50.10" height="3.600" fill="#dadada" stroke="#8f8f8f" stroke-width="1"/><rect x="1908.90" y="494.70" width="31.10" height="6.300" fill="#0f74e0"/><rect x="1940.00" y="494.70" width="20.00" height="6.300" fill="#22c18d"/><rect x="1909.40" y="508.25" width="50.10" height="3.600" fill="#dadada" stroke="#8f8f8f" stroke-width="1"/><rect x="1908.90" y="514.55" width="31.10" height="6.300" fill="#0f74e0"/><rect x="1940.00" y="514.55" width="20.00" height="6.300" fill="#22c18d"/><path d="M1116.90 242.95V246.15H1128.20V299.50H1135.90" fill="none" stroke="#000" stroke-width="1.100"/><path d="M1140.90 299.50l-7-3.100v6.200z" fill="#000"/><path d="M1193.70 302.50V305.70H1205.00V319.35H1212.70" fill="none" stroke="#000" stroke-width="1.100"/><path d="M1217.70 319.35l-7-3.100v6.200z" fill="#000"/><path d="M1270.50 322.35V325.55H1281.80V339.20H1289.50" fill="none" stroke="#000" stroke-width="1.100"/><path d="M1294.50 339.20l-7-3.100v6.200z" fill="#000"/><path d="M1347.30 342.20V345.40H1358.60V359.05H1366.30" fill="none" stroke="#000" stroke-width="1.100"/><path d="M1371.30 359.05l-7-3.100v6.200z" fill="#000"/><path d="M1424.10 362.05V365.25H1435.40V378.90H1443.10" fill="none" stroke="#000" stroke-width="1.100"/><path d="M1448.10 378.90l-7-3.100v6.200z" fill="#000"/><path d="M1616.10 381.90V385.10H1627.40V418.60H1635.10" fill="none" stroke="#000" stroke-width="1.100"/><path d="M1640.10 418.60l-7-3.100v6.200z" fill="#000"/><path d="M1692.90 421.60V424.80H1704.20V438.45H1711.90" fill="none" stroke="#000" stroke-width="1.100"/><path d="M1716.90 438.45l-7-3.100v6.200z" fill="#000"/><path d="M1884.90 441.45V444.65H1896.20V498.00H1903.90" fill="none" stroke="#000" stroke-width="1.100"/><path d="M1908.90 498.00l-7-3.100v6.200z" fill="#000"/><path d="M1916.90 504.65H1896.20V517.85H1903.90" fill="none" stroke="#000" stroke-width="1.100"/><path d="M1908.90 517.85l-7-3.100v6.200z" fill="#000"/><path d="M876.900 81V910" stroke="#ff3b6b" stroke-width="1.700" stroke-dasharray="5 1.700" fill="none"/></svg>
<div class="gl" style="left:272px;top:88.60px;font-weight:bold;color:#444;letter-spacing:-.3px">Земляные работы</div>
<div class="gl" style="right:726.0px;top:107.25px;letter-spacing:.27px">Вертикальная планировка территории</div>
<div class="gl" style="right:738.0px;top:127.10px;letter-spacing:.27px">Устройство котлована</div>
<div class="gl" style="left:272px;top:146.95px;letter-spacing:0.27px">Устройство песчаного основания</div>
<div class="gl" style="left:771px;top:187.85px;font-weight:bold;color:#444;letter-spacing:-.3px">Фундамент</div>
<div class="gl" style="left:349px;top:206.50px;letter-spacing:0.27px">Устройство буронабивных свай захватка 1</div>
<div class="gl" style="left:426px;top:226.35px;letter-spacing:0.27px">Устройство буронабивных свай захватка 2</div>
<div class="gl" style="left:503px;top:246.20px;letter-spacing:0.27px">Устройство буронабивных свай захватка 3</div>
<div class="gl" style="left:580px;top:266.05px;letter-spacing:0.27px">Устройство буронабивных свай захватка 4</div>
<div class="gl" style="left:771px;top:285.90px;letter-spacing:0.27px">Устройство фундаментной плиты</div>
<div class="gl" style="left:848px;top:325.60px;letter-spacing:0.27px">Устройство монолитных стен цокольного этажа</div>
<div class="gl" style="left:1041px;top:345.45px;letter-spacing:0.27px">Устройство монолитного перекрытия</div>
</div>
<div id="side" class="abs"></div>
<div class="abs" style="left:0;top:80px;width:40px;height:40px;background:#1976d2"></div>
<div class="abs" style="left:0;top:357px;width:40px;height:1px;background:#b9b9be"></div>
<svg class="ic" style="left:7px;top:7px;stroke-width:1.85" width="26" height="26" viewBox="0 0 24 24"><path d="M2.500 20.500h19M5 20.500v-9.500c0-.8.3-1.300.9-1.800l5-4.400c.7-.6 1.500-.6 2.200 0l5 4.400c.6.5.9 1 .9 1.800v9.500M10 20.500v-3.500a2 2 0 0 1 4 0v3.500"/></svg>
<svg class="ic" style="left:7px;top:47px;stroke-width:1.85" width="26" height="26" viewBox="0 0 24 24"><circle cx="12" cy="12.300" r="9"/><ellipse cx="12" cy="12.300" rx="4" ry="9"/><path d="M3 12.300h18M4.500 7.800h15M4.500 16.800h15" stroke-width="1.500"/></svg>
<svg class="ic" style="left:0px;top:80px" width="40" height="40" viewBox="0 0 40 40"><path d="M10 13h12M14.500 20h12M18 27h12" stroke="#fff" stroke-width="2"/></svg>
<svg class="ic" style="left:7px;top:126px;stroke-width:1.85" width="26" height="26" viewBox="0 0 24 24"><rect x="3" y="3.500" width="18" height="17.500" rx="1.800"/><path d="M7.800 7.500v7.500M12 7.500v4M16.500 7.500v5.500"/></svg>
<svg class="ic" style="left:7px;top:166px;stroke-width:1.85" width="26" height="26" viewBox="0 0 24 24"><path d="M3 20.500h18v-8h-5.500v8M15.500 20.500v-11.500h-6v11.500M9.500 20.500v-6.500h-6.500v6.500"/><path d="M2.500 6c3-3.500 6-3.500 9-1s6 2.500 9.500-1.500"/></svg>
<svg class="ic" style="left:7px;top:205px;stroke-width:1.85" width="26" height="26" viewBox="0 0 24 24"><path d="M7.500 8v-2.500c0-1.100.9-2 2-2h9.500c1.100 0 2 .9 2 2v7c0 1.100-.9 2-2 2h-2"/><rect x="3" y="8.500" width="14" height="12" rx="2"/><path d="M3 12h14"/></svg>
<svg class="ic" style="left:7px;top:245px;stroke-width:1.85" width="26" height="26" viewBox="0 0 24 24"><path d="M4 21.500v-16c3.500-2.500 5.500-1.500 8 0s5 2 8.500-.5v10.500c-3.500 2.500-6 2-8.500.5s-4.500-2.500-8-.5"/></svg>
<svg class="ic" style="left:7px;top:285px;stroke-width:1.85" width="26" height="26" viewBox="0 0 24 24"><path d="M3 3h18M3 21h18M5 8l5 8.500M10.500 8l5 8.500M16 8l4 7"/></svg>
<svg class="ic" style="left:7px;top:325px;stroke-width:1.85" width="26" height="26" viewBox="0 0 24 24"><rect x="3" y="3" width="7.500" height="7.500"/><rect x="13.500" y="3" width="7.500" height="7.500"/><rect x="3" y="13.500" width="7.500" height="7.500"/><rect x="13.500" y="13.500" width="7.500" height="7.500"/></svg>
<svg class="ic" style="left:7px;top:365px;stroke-width:1.85" width="26" height="26" viewBox="0 0 24 24"><ellipse cx="12" cy="6.500" rx="9" ry="4"/><path d="M3 6.500v11c0 2.200 4 4 9 4s9-1.800 9-4v-11M3 12c0 2.200 4 4 9 4s9-1.800 9-4"/></svg>
<svg class="ic" style="left:7px;top:405px;stroke-width:1.85" width="26" height="26" viewBox="0 0 24 24"><path d="M6 3h-3v18h3M18 3h3v18h-3"/><text x="12" y="17" text-anchor="middle" font-size="14.500" font-family="Liberation Sans, sans-serif" fill="#4a4a4f" stroke="#4a4a4f" stroke-width=".500">A</text></svg>
<svg class="ic" style="left:7px;top:444px;stroke-width:1.85" width="26" height="26" viewBox="0 0 24 24"><rect x="3" y="4.500" width="18" height="16.500" rx="2.500"/><path d="M3 9h18M8 2.500v3.500M16 2.500v3.500"/><path d="M7.500 12.500h.01M12 12.500h.01M16.500 12.500h.01M7.500 16.500h.01M12 16.500h.01M16.500 16.500h.01" stroke-width="1.800"/></svg>
<svg class="ic" style="left:7px;top:484px;stroke-width:1.85" width="26" height="26" viewBox="0 0 24 24"><path d="M2.300 12c2.300-4.500 5.700-6.600 9.700-6.600s7.400 2.100 9.700 6.600c-2.300 4.500-5.700 6.600-9.700 6.600s-7.400-2.100-9.700-6.600z"/><circle cx="12" cy="12" r="2.600"/></svg>
<svg class="ic" style="left:7px;top:722px;stroke-width:1.85" width="26" height="26" viewBox="0 0 24 24"><circle cx="12" cy="12" r="3.400"/><path d="M12 2.800v2.400M12 18.800v2.400M2.800 12h2.400M18.800 12h2.400M5.500 5.500l1.700 1.700M16.800 16.800l1.700 1.700M5.500 18.500l1.700-1.700M16.800 7.200l1.700-1.700"/></svg>
<svg class="ic" style="left:7px;top:761px;stroke-width:1.85" width="26" height="26" viewBox="0 0 24 24"><path d="M3 21.500v-14.500c0-1.400 1.100-2.500 2.500-2.500h13c1.400 0 2.500 1.100 2.500 2.500v8.500c0 1.400-1.100 2.500-2.500 2.500h-11.500z"/><path d="M7 8.500h10M7 11.300h10M7 14.100h6" stroke-width="1.500"/></svg>
<svg class="ic" style="left:7px;top:800px;stroke-width:1.85" width="26" height="26" viewBox="0 0 24 24"><path d="M4 17.500h16c-1.500-1.500-2-3-2-5v-2.500c0-3.500-2.500-6.500-6-6.500s-6 3-6 6.500v2.500c0 2-.5 3.500-2 5zM9.500 18c0 1.500 1 2.500 2.500 2.500s2.500-1 2.500-2.500"/></svg>
<svg class="ic" style="left:7px;top:840px;stroke-width:1.85" width="26" height="26" viewBox="0 0 24 24"><path d="M2.500 5.500h11M8 3v2.500M11.500 5.500c-1 4-4 7.500-8 9.500M5 5.500c1 3.500 3.500 6.500 7 8"/><path d="M12 21.500l4.500-11 4.500 11M13.600 18h5.800"/></svg>
<svg class="ic" style="left:7px;top:879px;stroke-width:1.85" width="26" height="26" viewBox="0 0 24 24"><circle cx="12" cy="12" r="9.200"/><path d="M12 11v6"/><path d="M12 7.300h.01" stroke-width="2"/></svg>
<div id="top" class="abs"></div>
<div id="tb" class="abs"></div>
<div id="tb2" class="abs"></div>
<div class="abs vsep" style="left:80px;top:0;height:40px"></div>
<div class="abs vsep" style="left:1720px;top:0;height:40px"></div>
<div class="abs vsep" style="left:1761px;top:0;height:40px"></div>
<div class="abs vsep" style="left:1801px;top:0;height:40px"></div>
<div class="abs" style="left:0;top:0;width:1918px;height:1px;background:#e2e2e5"></div>
<svg class="ic" style="left:47.5px;top:7.5px;stroke-width:2" width="25.5" height="25.5" viewBox="0 0 24 24"><path d="M3 21.500v-4.500l12.500-12.500c1.200-1.200 3-1.200 4.200 0l.3.300c1.200 1.200 1.200 3 0 4.200l-12.500 12.500zM13 7l4.500 4.500"/></svg>
<svg class="ic" style="left:94px;top:9px;stroke-width:2" width="23" height="23" viewBox="0 0 24 24"><circle cx="12" cy="12" r="10.500"/><path d="M12 6.500v5.500l3.500 3.500"/></svg>
<div class="t" style="left:131px;top:13px;font-size:13px;line-height:16px;letter-spacing:.28px;color:#1a1a1a">Корпорация / Западный филиал / Гостиница / Строительно-монтажные работы</div>
<svg class="ic" style="left:1729px;top:9px;stroke-width:2" width="23" height="23" viewBox="0 0 24 24"><path d="M2.500 2.500h19M2.500 21.500h19M8.300 8v8M5.800 13.500l2.500 2.500 2.500-2.500M16.300 16v-8M13.800 10.500l2.500-2.500 2.500 2.500"/></svg>
<svg class="ic" style="left:1770px;top:9px;stroke-width:2" width="23" height="23" viewBox="0 0 24 24"><path d="M21.800 12.500a9.600 9.600 0 1 1-3.500-7.800M21.800 2.500v6.300h-6.300"/></svg>
<svg class="ic" style="left:1810px;top:9px;stroke-width:2" width="23" height="23" viewBox="0 0 24 24"><rect x="1.700" y="1.700" width="20.600" height="20.600" rx="1.600"/><path d="M8.500 1.700v20.600"/></svg>
<svg class="ic" style="left:1850px;top:9px;stroke-width:2" width="23" height="23" viewBox="0 0 24 24"><rect x="1.700" y="1.700" width="20.600" height="20.600" rx="1.600"/><path d="M15.500 1.700v20.600"/></svg>
<svg class="ic" style="left:1889px;top:9px;stroke-width:2" width="23" height="23" viewBox="0 0 24 24"><rect x="1.700" y="1.700" width="20.600" height="20.600" rx="1.600" stroke="#c9c9cd"/><path d="M1.700 15.500h20.600" stroke="#c9c9cd"/></svg>
<svg style="left:56px;top:57.500px" width="9.500" height="5.700" viewBox="0 0 10 6"><path d="M0 0h10l-5 6z" fill="#4a4a4f"/></svg>
<div class="abs badge" style="left:87px;width:73px;letter-spacing:.2px">Актуальная</div>
<div class="abs badge" style="left:163px;width:99px;letter-spacing:.1px">29.04.2025 09:00</div>
<div class="t" style="left:267px;top:53px;font-size:13px;line-height:16px;letter-spacing:.2px;color:#1a1a1a">Гостиница СМР-Актуальный</div>
<svg class="ic" style="left:529px;top:49px;stroke-width:2" width="23" height="23" viewBox="0 0 24 24"><circle cx="10" cy="10" r="7.500"/><path d="M15.500 15.500l6.500 6.500"/></svg>
<svg class="ic" style="left:568px;top:49px;stroke-width:2" width="23" height="23" viewBox="0 0 24 24"><path d="M1.300 12c2.600-4.900 6.400-7.100 10.700-7.100s8.100 2.200 10.700 7.100c-2.600 4.900-6.400 7.100-10.700 7.100s-8.100-2.200-10.700-7.100z"/><circle cx="12" cy="12" r="2.700"/></svg>
<svg class="ic" style="left:608px;top:49px;stroke-width:2" width="23" height="23" viewBox="0 0 24 24"><rect x="2" y="2.500" width="20" height="19" rx="1.800"/><path d="M2.500 3.600h19" stroke-width="3"/><path d="M7 21.500v-11c0-1.100.9-2 2-2h13M13.500 21.500v-6c0-1.100.9-2 2-2h6"/></svg>
<svg class="ic" style="left:649px;top:49px;stroke-width:2" width="23" height="23" viewBox="0 0 24 24"><path d="M13 6.500h-8.500c-1.100 0-2 .9-2 2v11c0 1.100.9 2 2 2h13c1.100 0 2-.9 2-2v-8.500" stroke-dasharray="0"/><path d="M7 14l3.500 3.500 6-6M15.500 5l2 2 4-4.500" /></svg>
<svg class="ic" style="left:689px;top:49px;stroke-width:2" width="23" height="23" viewBox="0 0 24 24"><path d="M13 6.500h-8.500c-1.100 0-2 .9-2 2v11c0 1.100.9 2 2 2h13c1.100 0 2-.9 2-2v-8.500"/><path d="M7 14l3.500 3.500 6-6M17 2.500l4 4M21 2.500l-4 4"/></svg>
<div class="abs vsep" style="left:719px;top:41px;height:39px;background:#c4c4c8"></div>
<div class="abs" style="left:720px;top:41px;width:98px;height:39px;background:#e1e1e3;border-radius:0 4px 4px 0"></div>
<svg class="ic" style="left:728px;top:51px;stroke-width:2" width="20" height="20" viewBox="0 0 24 24"><path d="M3.800 2h16.400a1.500 1.500 0 0 1 1.100 2.500l-6.800 8v7.200l-5 1.600v-8.800l-6.800-8a1.500 1.500 0 0 1 1.100-2.500z" stroke-width="2.400"/></svg>
<svg style="left:745.500px;top:69px" width="6" height="3" viewBox="0 0 6 3"><path d="M0 0h6l-3 3z" fill="#4a4a4f"/></svg>
<div class="t" style="left:762px;top:53px;font-size:12.500px;line-height:16px;letter-spacing:.2px;color:#8a8a90">14 / 165</div>
<svg class="ic" style="left:827px;top:61px" width="11" height="10" viewBox="0 0 11 10"><path d="M.500 .500l10 9M10.500 .500l-10 9" stroke-width="1.900"/></svg>
<svg class="ic" style="left:838px;top:50px" width="11" height="10" viewBox="0 0 11 10"><path d="M.700 .700h9.600l-3.500 4v4l-2.600 .600v-4.600z" stroke-width="1.100"/></svg>
<div class="abs" style="left:858px;top:41px;width:5px;height:869px;background:#b4b4b9;border-left:1px solid #cfcfd3;border-right:1px solid #cfcfd3"></div>
<div class="abs" style="left:867.500px;top:44.500px;width:157.500px;height:31px;background:#fff;border:1px solid #cdcdd1;border-radius:4px"></div>
<div class="t" style="left:878px;top:52px;font-size:13px;line-height:16px;letter-spacing:.2px;color:#1a1a1a">Диаграмма Ганта</div>
<svg style="left:999px;top:57px" width="10" height="6" viewBox="0 0 10 6"><path d="M0 0h10l-5 6z" fill="#4a4a4f"/></svg>
<svg class="ic" style="left:1810px;top:48px;stroke-width:2" width="23" height="23" viewBox="0 0 24 24"><path d="M2 5h5M11.500 5h10.500M2 12h12.500M19 12h3M2 19h3.500M10 19h12"/><circle cx="9.300" cy="5" r="2.100"/><circle cx="16.800" cy="12" r="2.100"/><circle cx="7.800" cy="19" r="2.100"/></svg>
<svg class="ic" style="left:1851px;top:48px;stroke-width:2" width="23" height="23" viewBox="0 0 24 24"><path d="M9.600 1.500v3.600l7.700 3.200-14.800 6.300 7.100 3.200v3.900"/></svg>
<svg style="left:1866.800px;top:68px" width="5.500" height="2.800" viewBox="0 0 6 3"><path d="M0 0h6l-3 3z" fill="#4a4a4f"/></svg>
<svg class="ic" style="left:1890px;top:51px;stroke-width:1.8" width="18" height="14" viewBox="0 0 18 14"><path d="M3.500 .800h11" stroke-width="1.300"/><rect x=".900" y="2.800" width="16.200" height="8.400" rx="2.600"/><rect x="3.600" y="7" width="10.800" height="6.200" rx="1" fill="#f0f0f2"/></svg>
<svg style="left:1906.200px;top:68px" width="5.500" height="2.800" viewBox="0 0 6 3"><path d="M0 0h6l-3 3z" fill="#4a4a4f"/></svg>
<div class="abs" style="left:427px;top:125px;width:225px;height:648px;background:#fff;border:1px solid #8c8c8c;box-shadow:0 8px 10px -5px rgba(0,0,0,.18)"></div>
<div class="abs" style="left:428px;top:126px;width:223px;height:41px;background:#f0f0f2;border-bottom:1px solid #9a9a9a"></div>
<svg class="ic" style="left:434.500px;top:138px" width="17" height="16" viewBox="0 0 16 15"><path d="M.800 .800h14.400l-5.500 6.200v6.200l-3.400 1v-7.400z" stroke="#333" stroke-width="1.200"/></svg>
<div class="t" style="left:455px;top:138px;font-size:12.500px;line-height:16px;letter-spacing:.2px;color:#1a1a1a">Старт</div>
<svg class="ic" style="left:624px;top:139px" width="14.500" height="14" viewBox="0 0 14 14"><path d="M.500 .500l13 13M13.500 .500l-13 13" stroke="#222" stroke-width="1.700"/></svg>
<div class="abs" style="left:435px;top:174px;width:208px;height:17px;background:#fff;border:1px solid #767676"></div>
<div class="t" style="left:439px;top:175px;font-size:13px;line-height:15px;letter-spacing:.26px;color:#111">Выберите из списка</div>
<svg class="ic" style="left:629px;top:180px" width="9" height="6" viewBox="0 0 9 6"><path d="M.800 .800l3.700 4 3.700-4" stroke="#222" stroke-width="1.500"/></svg>
<div class="abs" style="left:435px;top:198px;width:208px;height:19px;background:#fff;border:1px solid #767676"></div>
<div class="t" style="left:438px;top:200px;font-size:13px;line-height:15px;letter-spacing:.3px;color:#9a9aa0">Поиск</div>
<svg style="left:450px;top:223px" width="16" height="16" viewBox="0 0 16 16"><rect width="16" height="16" rx="2" fill="#1976d2"/><path d="M3.500 8h9" stroke="#fff" stroke-width="2"/></svg>
<div class="t" style="left:481.500px;top:224px;font-size:13px;line-height:15px;letter-spacing:.16px;color:#1a1a1a">(Выделить все)</div>
<div class="abs" style="left:435px;top:246px;width:208px;height:1px;background:#a8a8ad"></div>
<div class="abs" style="left:638.500px;top:247px;width:4.500px;height:482px;background:#ededf0"></div>
<div class="abs" style="left:638.500px;top:247px;width:4.500px;height:363px;background:#cfcfd3"></div>
<svg style="left:0;top:0" width="660" height="780" viewBox="0 0 660 780"><path d="M446.500 274V729" stroke="#8a8a8a" stroke-width="1" fill="none"/><path d="M446.500 289.5H459" stroke="#8a8a8a" stroke-width="1" fill="none"/><path d="M446.500 320H459" stroke="#8a8a8a" stroke-width="1" fill="none"/><path d="M446.500 688H459" stroke="#8a8a8a" stroke-width="1" fill="none"/><path d="M446.500 718.5H459" stroke="#8a8a8a" stroke-width="1" fill="none"/><path d="M470.500 333.500V654.0" stroke="#8a8a8a" stroke-width="1" fill="none"/><path d="M471 379.1H498" stroke="#b4b4b4" stroke-width="1" fill="none"/><path d="M471 409.6H498" stroke="#b4b4b4" stroke-width="1" fill="none"/><path d="M471 440.1H498" stroke="#b4b4b4" stroke-width="1" fill="none"/><path d="M471 470.7H498" stroke="#b4b4b4" stroke-width="1" fill="none"/><path d="M471 501.2H498" stroke="#b4b4b4" stroke-width="1" fill="none"/><path d="M471 531.8H498" stroke="#b4b4b4" stroke-width="1" fill="none"/><path d="M471 562.4H498" stroke="#b4b4b4" stroke-width="1" fill="none"/><path d="M471 592.9H498" stroke="#b4b4b4" stroke-width="1" fill="none"/><path d="M471 623.5H498" stroke="#b4b4b4" stroke-width="1" fill="none"/><path d="M471 654.0H498" stroke="#b4b4b4" stroke-width="1" fill="none"/><path d="M442 259.500h9l-4.500 7z" fill="#4d4d52"/><path d="M468.500 285.500v9l7-4.500z" fill="#4d4d52"/><path d="M467 317.500h9l-4.500 7z" fill="#4d4d52"/><path d="M468.500 683.500v9l7-4.500z" fill="#4d4d52"/><path d="M468.500 714v9l7-4.500z" fill="#4d4d52"/></svg>
<svg style="left:459px;top:254px" width="16" height="16" viewBox="0 0 16 16"><rect width="16" height="16" rx="2" fill="#1976d2"/><path d="M3.500 8h9" stroke="#fff" stroke-width="2"/></svg>
<div class="t" style="left:480.5px;top:254.8px;font-size:13px;line-height:16px;letter-spacing:.07px;color:#1a1a1a">2025</div>
<svg style="left:483.5px;top:282px" width="16" height="16" viewBox="0 0 16 16"><rect width="16" height="16" rx="2" fill="#1976d2"/><path d="M3 8.300l3.700 3.700 6.500-7.500" stroke="#fff" stroke-width="2" fill="none"/></svg>
<div class="t" style="left:504.5px;top:282.8px;font-size:13px;line-height:16px;letter-spacing:.07px;color:#1a1a1a">Апрель</div>
<svg style="left:483.5px;top:312.5px" width="16" height="16" viewBox="0 0 16 16"><rect width="16" height="16" rx="2" fill="#1976d2"/><path d="M3 8.300l3.700 3.700 6.500-7.500" stroke="#fff" stroke-width="2" fill="none"/></svg>
<div class="t" style="left:504.5px;top:313.3px;font-size:13px;line-height:16px;letter-spacing:.07px;color:#1a1a1a">Май</div>
<svg style="left:506px;top:340.5px" width="16" height="16" viewBox="0 0 16 16"><rect width="16" height="16" rx="2" fill="#1976d2"/><path d="M3 8.300l3.700 3.700 6.500-7.500" stroke="#fff" stroke-width="2" fill="none"/></svg>
<div class="t" style="left:527px;top:341.3px;font-size:13px;line-height:16px;letter-spacing:.07px;color:#1a1a1a">02.05.2025</div>
<svg style="left:506px;top:371.1px" width="16" height="16" viewBox="0 0 16 16"><rect width="16" height="16" rx="2" fill="#1976d2"/><path d="M3 8.300l3.700 3.700 6.500-7.500" stroke="#fff" stroke-width="2" fill="none"/></svg>
<div class="t" style="left:527px;top:371.9px;font-size:13px;line-height:16px;letter-spacing:.07px;color:#1a1a1a">04.05.2025</div>
<svg style="left:506px;top:401.6px" width="16" height="16" viewBox="0 0 16 16"><rect width="16" height="16" rx="2" fill="#1976d2"/><path d="M3 8.300l3.700 3.700 6.500-7.500" stroke="#fff" stroke-width="2" fill="none"/></svg>
<div class="t" style="left:527px;top:402.4px;font-size:13px;line-height:16px;letter-spacing:.07px;color:#1a1a1a">06.05.2025</div>
<svg style="left:506px;top:432.1px" width="16" height="16" viewBox="0 0 16 16"><rect width="16" height="16" rx="2" fill="#1976d2"/><path d="M3 8.300l3.700 3.700 6.500-7.500" stroke="#fff" stroke-width="2" fill="none"/></svg>
<div class="t" style="left:527px;top:432.9px;font-size:13px;line-height:16px;letter-spacing:.07px;color:#1a1a1a">08.05.2025</div>
<svg style="left:506px;top:462.7px" width="16" height="16" viewBox="0 0 16 16"><rect width="16" height="16" rx="2" fill="#1976d2"/><path d="M3 8.300l3.700 3.700 6.500-7.500" stroke="#fff" stroke-width="2" fill="none"/></svg>
<div class="t" style="left:527px;top:463.5px;font-size:13px;line-height:16px;letter-spacing:.07px;color:#1a1a1a">10.05.2025</div>
<svg style="left:506px;top:493.2px" width="16" height="16" viewBox="0 0 16 16"><rect width="16" height="16" rx="2" fill="#1976d2"/><path d="M3 8.300l3.700 3.700 6.500-7.500" stroke="#fff" stroke-width="2" fill="none"/></svg>
<div class="t" style="left:527px;top:494.1px;font-size:13px;line-height:16px;letter-spacing:.07px;color:#1a1a1a">12.05.2025</div>
<svg style="left:506px;top:523.8px" width="16" height="16" viewBox="0 0 16 16"><rect width="16" height="16" rx="2" fill="#1976d2"/><path d="M3 8.300l3.700 3.700 6.500-7.500" stroke="#fff" stroke-width="2" fill="none"/></svg>
<div class="t" style="left:527px;top:524.6px;font-size:13px;line-height:16px;letter-spacing:.07px;color:#1a1a1a">14.05.2025</div>
<svg style="left:506px;top:554.4px" width="16" height="16" viewBox="0 0 16 16"><rect width="16" height="16" rx="2" fill="#1976d2"/><path d="M3 8.300l3.700 3.700 6.500-7.500" stroke="#fff" stroke-width="2" fill="none"/></svg>
<div class="t" style="left:527px;top:555.1px;font-size:13px;line-height:16px;letter-spacing:.07px;color:#1a1a1a">19.05.2025</div>
<svg style="left:506px;top:584.9px" width="16" height="16" viewBox="0 0 16 16"><rect width="16" height="16" rx="2" fill="#1976d2"/><path d="M3 8.300l3.700 3.700 6.500-7.500" stroke="#fff" stroke-width="2" fill="none"/></svg>
<div class="t" style="left:527px;top:585.7px;font-size:13px;line-height:16px;letter-spacing:.07px;color:#1a1a1a">21.05.2025</div>
<svg style="left:506px;top:615.5px" width="16" height="16" viewBox="0 0 16 16"><rect width="16" height="16" rx="2" fill="#1976d2"/><path d="M3 8.300l3.700 3.700 6.500-7.500" stroke="#fff" stroke-width="2" fill="none"/></svg>
<div class="t" style="left:527px;top:616.2px;font-size:13px;line-height:16px;letter-spacing:.07px;color:#1a1a1a">26.05.2025</div>
<svg style="left:506px;top:646.0px" width="16" height="16" viewBox="0 0 16 16"><rect width="16" height="16" rx="2" fill="#1976d2"/><path d="M3 8.300l3.700 3.700 6.500-7.500" stroke="#fff" stroke-width="2" fill="none"/></svg>
<div class="t" style="left:527px;top:646.8px;font-size:13px;line-height:16px;letter-spacing:.07px;color:#1a1a1a">28.05.2025</div>
<svg style="left:483.5px;top:680px" width="16" height="16" viewBox="0 0 16 16"><rect x=".500" y=".500" width="15" height="15" rx="2" fill="#fff" stroke="#767676"/></svg>
<div class="t" style="left:504.5px;top:680.8px;font-size:13px;line-height:16px;letter-spacing:.07px;color:#1a1a1a">Июнь</div>
<svg style="left:483.5px;top:710.5px" width="16" height="16" viewBox="0 0 16 16"><rect x=".500" y=".500" width="15" height="15" rx="2" fill="#fff" stroke="#767676"/></svg>
<div class="t" style="left:504.5px;top:711.3px;font-size:13px;line-height:16px;letter-spacing:.07px;color:#1a1a1a">Июль</div>
<div class="abs" style="left:430px;top:729px;width:215px;height:7px;background:#fff"></div>
<div class="abs" style="left:435px;top:736px;width:90px;height:29px;border:1px solid #8fc0f0;border-radius:4px;background:#fff;color:#1976d2;font-size:13px;line-height:27px;text-align:center;letter-spacing:.2px">Сбросить</div>
<div class="abs" style="left:553px;top:736px;width:90px;height:29px;border-radius:4px;background:#1976d2;color:#fff;font-size:13px;line-height:29px;text-align:center;letter-spacing:.2px;box-shadow:0 2px 3px rgba(0,0,0,.3);-webkit-text-stroke:.2px #fff">Применить</div>
<div class="abs" style="left:720px;top:80px;width:370px;height:386px;background:#f4f4f6"></div>
<svg class="ic" style="left:734px;top:92.6px;stroke-width:1.900" width="25" height="25" viewBox="0 0 25 25"><rect x="1" y="10" width="12.500" height="12.500" rx="2" stroke-width="1.850"/><path d="M4 16l2.500 2.500 4.500-5" stroke-width="1.850"/><path d="M13.8 0.8h10.200l-3.800 4.300v4.300l-2.600 .800v-5.100z" stroke-width="1.400"/></svg>
<div class="t" style="left:775px;top:95.4px;font-size:14px;line-height:18px;letter-spacing:.62px;color:#1a1a1a">Показать только выделенное</div>
<div class="abs" style="left:988.3px;top:96.1px;width:29.5px;height:18px;border:1px solid #c6c6ca;border-radius:3px;background:#ebebed;font-family:'Liberation Mono',monospace;font-size:11px;line-height:16px;text-align:center;color:#3a3a3a;-webkit-text-stroke:.3px #3a3a3a;box-shadow:0 1px 0 #c6c6ca">Alt</div>
<div class="t" style="left:1019.3px;top:95.3px;font-size:13px;line-height:18px;color:#333">+</div>
<div class="abs" style="left:1028.3px;top:96.1px;width:16px;height:18px;border:1px solid #c6c6ca;border-radius:3px;background:#ebebed;font-family:'Liberation Mono',monospace;font-size:11px;line-height:16px;text-align:center;color:#3a3a3a;-webkit-text-stroke:.3px #3a3a3a;box-shadow:0 1px 0 #c6c6ca">Z</div>
<svg class="ic" style="left:734px;top:140.9px;stroke-width:1.900" width="25" height="25" viewBox="0 0 25 25"><path d="M3 7l9.500 10.500 9.500-10.500" stroke-width="1.900"/><path d="M6.500 5.800h12" stroke-dasharray="2 2" stroke-width="1.750"/><circle cx="2.500" cy="6.300" r="1.700" fill="#4a4a4f"/><circle cx="22.500" cy="6.300" r="1.700" fill="#4a4a4f"/><circle cx="12.500" cy="17.800" r="1.800" fill="#4a4a4f"/></svg>
<div class="t" style="left:775px;top:143.7px;font-size:14px;line-height:18px;letter-spacing:.62px;color:#1a1a1a">Критический путь</div>
<div class="abs" style="left:908.8px;top:144.4px;width:29.5px;height:18px;border:1px solid #c6c6ca;border-radius:3px;background:#ebebed;font-family:'Liberation Mono',monospace;font-size:11px;line-height:16px;text-align:center;color:#3a3a3a;-webkit-text-stroke:.3px #3a3a3a;box-shadow:0 1px 0 #c6c6ca">Alt</div>
<div class="t" style="left:939.8px;top:143.6px;font-size:13px;line-height:18px;color:#333">+</div>
<div class="abs" style="left:948.8px;top:144.4px;width:16px;height:18px;border:1px solid #c6c6ca;border-radius:3px;background:#ebebed;font-family:'Liberation Mono',monospace;font-size:11px;line-height:16px;text-align:center;color:#3a3a3a;-webkit-text-stroke:.3px #3a3a3a;box-shadow:0 1px 0 #c6c6ca">B</div>
<svg class="ic" style="left:734px;top:189.2px;stroke-width:1.900" width="25" height="25" viewBox="0 0 25 25"><path d="M4.500 9.500h-2a1.500 1.500 0 0 0-1.500 1.500v11a1.500 1.500 0 0 0 1.500 1.500h10a1.500 1.500 0 0 0 1.500-1.500v-3M10.500 9.500h2.500" stroke-width="1.750"/><rect x="3.500" y="8" width="8" height="3.500" rx="1" fill="#4a4a4f"/><path d="M4 15h4M4 18h2.500M8.500 20.500l.5-2.500 5-5 2 2-5 5z" stroke-width="1.200"/><path d="M13.8 0.8h10.200l-3.800 4.300v4.300l-2.600 .800v-5.100z" stroke-width="1.400"/></svg>
<div class="t" style="left:775px;top:192.0px;font-size:14px;line-height:18px;letter-spacing:.62px;color:#1a1a1a">Фильтр по акцептованию</div>
<svg class="ic" style="left:1060px;top:191.4px" width="11" height="19" viewBox="0 0 11 19"><path d="M1.500 1.500l8 8-8 8" stroke="#4a4a4f" stroke-width="1.850"/></svg>
<svg class="ic" style="left:734px;top:237.5px;stroke-width:1.900" width="25" height="25" viewBox="0 0 25 25"><circle cx="7.500" cy="12.500" r="3.300" stroke-width="1.850"/><path d="M1 23c0-3.500 2.500-5.500 6.500-5.500s6.500 2 6.500 5.500z" stroke-width="1.850"/><path d="M13.8 0.8h10.200l-3.800 4.300v4.300l-2.600 .800v-5.100z" stroke-width="1.400"/></svg>
<div class="t" style="left:775px;top:240.3px;font-size:14px;line-height:18px;letter-spacing:.62px;color:#1a1a1a">Фильтр исполнителя по табелю</div>
<svg class="ic" style="left:1060px;top:239.7px" width="11" height="19" viewBox="0 0 11 19"><path d="M1.500 1.500l8 8-8 8" stroke="#4a4a4f" stroke-width="1.850"/></svg>
<svg class="ic" style="left:734px;top:285.8px;stroke-width:1.900" width="25" height="25" viewBox="0 0 25 25"><path d="M1.500 23l12.500-14" stroke-width="1.850"/><circle cx="4" cy="12" r="2.600" stroke-width="1.750"/><circle cx="12" cy="20.500" r="2.600" stroke-width="1.750"/><path d="M13.8 0.8h10.200l-3.800 4.300v4.300l-2.600 .800v-5.100z" stroke-width="1.400"/></svg>
<div class="t" style="left:775px;top:288.6px;font-size:14px;line-height:18px;letter-spacing:.62px;color:#1a1a1a">Фильтр по % выполнения</div>
<svg class="ic" style="left:1060px;top:288.0px" width="11" height="19" viewBox="0 0 11 19"><path d="M1.500 1.500l8 8-8 8" stroke="#4a4a4f" stroke-width="1.850"/></svg>
<svg class="ic" style="left:734px;top:334.1px;stroke-width:1.900" width="25" height="25" viewBox="0 0 25 25"><rect x="1" y="10" width="14" height="13.500" rx="1.800" stroke-width="1.750"/><path d="M1 14h14M4.500 8v3M11.500 8v3" stroke-width="1.750"/><path d="M4.500 17h.01M8 17h.01M11.500 17h.01M4.500 20.500h.01M8 20.500h.01M11.500 20.500h.01" stroke-width="1.700"/><path d="M13.8 0.8h10.200l-3.800 4.300v4.300l-2.600 .800v-5.100z" stroke-width="1.400"/></svg>
<div class="t" style="left:775px;top:336.9px;font-size:14px;line-height:18px;letter-spacing:.62px;color:#1a1a1a">Фильтр по суточному распределению</div>
<svg class="ic" style="left:1060px;top:336.3px" width="11" height="19" viewBox="0 0 11 19"><path d="M1.500 1.500l8 8-8 8" stroke="#4a4a4f" stroke-width="1.850"/></svg>
<svg class="ic" style="left:734px;top:382.4px;stroke-width:1.900" width="25" height="25" viewBox="0 0 25 25"><path d="M10 10.500v8.500a2.500 2.500 0 0 1-5 0v-9a1.200 1.200 0 0 1 2.500 0v8" stroke-width="1.400"/><path d="M12.500 9v10a5 5 0 0 1-10 0v-9.500a3.500 3.500 0 0 1 7 0" stroke-width="1.750"/><path d="M13.8 0.8h10.200l-3.800 4.300v4.300l-2.600 .800v-5.100z" stroke-width="1.400"/></svg>
<div class="t" style="left:775px;top:385.2px;font-size:14px;line-height:18px;letter-spacing:.62px;color:#1a1a1a">Фильтр по прикрепленным файлам</div>
<svg class="ic" style="left:1060px;top:384.6px" width="11" height="19" viewBox="0 0 11 19"><path d="M1.500 1.500l8 8-8 8" stroke="#4a4a4f" stroke-width="1.850"/></svg>
<svg class="ic" style="left:734px;top:430.7px;stroke-width:1.900" width="25" height="25" viewBox="0 0 25 25"><path d="M1.500 24v-12a1.500 1.500 0 0 1 1.500-1.500h10.500v9.500a1.500 1.500 0 0 1-1.500 1.500h-7z" stroke-width="1.750"/><path d="M8 13v3.500" stroke-width="1.850"/><path d="M8 18.800h.01" stroke-width="1.800"/><path d="M13.8 0.8h10.200l-3.800 4.300v4.300l-2.600 .800v-5.100z" stroke-width="1.400"/></svg>
<div class="t" style="left:775px;top:433.5px;font-size:14px;line-height:18px;letter-spacing:.62px;color:#1a1a1a">Фильтр по чатам</div>
<svg class="ic" style="left:1060px;top:432.9px" width="11" height="19" viewBox="0 0 11 19"><path d="M1.500 1.500l8 8-8 8" stroke="#4a4a4f" stroke-width="1.850"/></svg>
<svg style="left:0;top:0" width="1918" height="910" viewBox="0 0 1918 910"><path d="M647.6 183.2H591" stroke="#000" stroke-width="3.100" fill="none"/><path d="M582 183.2l11.6 -5.600v11.200z" fill="#000"/><ellipse cx="662.7" cy="183.2" rx="15.1" ry="17.3" fill="#fff" stroke="#000" stroke-width="3"/><path d="M682.8 210.4H626" stroke="#000" stroke-width="3.100" fill="none"/><path d="M617 210.4l11.6 -5.600v11.200z" fill="#000"/><ellipse cx="697.9" cy="210.4" rx="15.1" ry="17.3" fill="#fff" stroke="#000" stroke-width="3"/><path d="M378.3 231.2H438.3" stroke="#000" stroke-width="3.100" fill="none"/><path d="M447.3 231.2l-11.6 -5.600v11.200z" fill="#000"/><ellipse cx="363.2" cy="231.2" rx="15.1" ry="17.3" fill="#fff" stroke="#000" stroke-width="3"/><path d="M434.5 349.1H494.3" stroke="#000" stroke-width="3.100" fill="none"/><path d="M503.3 349.1l-11.6 -5.600v11.200z" fill="#000"/><ellipse cx="419.4" cy="349.1" rx="15.1" ry="17.3" fill="#fff" stroke="#000" stroke-width="3"/><path d="M712.9 751H654.3" stroke="#000" stroke-width="3.100" fill="none"/><path d="M645.3 751l11.6 -5.600v11.200z" fill="#000"/><ellipse cx="728" cy="751" rx="15.1" ry="17.3" fill="#fff" stroke="#000" stroke-width="3"/><path d="M503.1 105.2H563.8" stroke="#000" stroke-width="3.100" fill="none"/><path d="M572.8 105.2l-11.6 -5.600v11.200z" fill="#000"/><ellipse cx="488" cy="105.2" rx="15.1" ry="17.3" fill="#fff" stroke="#000" stroke-width="3"/><path d="M366.90000000000003 751H426.5" stroke="#000" stroke-width="3.100" fill="none"/><path d="M435.5 751l-11.6 -5.600v11.200z" fill="#000"/><ellipse cx="351.8" cy="751" rx="15.1" ry="17.3" fill="#fff" stroke="#000" stroke-width="3"/><path d="M553.7 147.2H614" stroke="#000" stroke-width="3.100" fill="none"/><path d="M623 147.2l-11.6 -5.600v11.200z" fill="#000"/><ellipse cx="538.6" cy="147.2" rx="15.1" ry="17.3" fill="#fff" stroke="#000" stroke-width="3"/><path d="M655.3000000000001 61.2H715.2" stroke="#000" stroke-width="3.100" fill="none"/><path d="M724.2 61.2l-11.6 -5.600v11.200z" fill="#000"/><ellipse cx="640.2" cy="61.2" rx="15.1" ry="17.3" fill="#fff" stroke="#000" stroke-width="3"/><path d="M917.0 66.4H857.8" stroke="#000" stroke-width="3.100" fill="none"/><path d="M848.8 66.4l11.6 -5.600v11.200z" fill="#000"/><ellipse cx="932.1" cy="66.4" rx="15.1" ry="17.3" fill="#fff" stroke="#000" stroke-width="3"/></svg>
<div class="num" style="left:642.7px;top:171.7px;width:40px;line-height:24px;">1</div>
<div class="num" style="left:677.9px;top:198.9px;width:40px;line-height:24px;">2</div>
<div class="num" style="left:343.2px;top:219.7px;width:40px;line-height:24px;">3</div>
<div class="num" style="left:399.4px;top:337.6px;width:40px;line-height:24px;">4</div>
<div class="num" style="left:708px;top:739.5px;width:40px;line-height:24px;">5</div>
<div class="num" style="left:468px;top:93.7px;width:40px;line-height:24px;">6</div>
<div class="num" style="left:331.8px;top:739.5px;width:40px;line-height:24px;">7</div>
<div class="num" style="left:518.6px;top:135.7px;width:40px;line-height:24px;">8</div>
<div class="num" style="left:620.2px;top:49.7px;width:40px;line-height:24px;">9</div>
<div class="num" style="left:912.1px;top:54.900000000000006px;width:40px;line-height:24px;letter-spacing:-1.2px;">10</div>
</body></html>
